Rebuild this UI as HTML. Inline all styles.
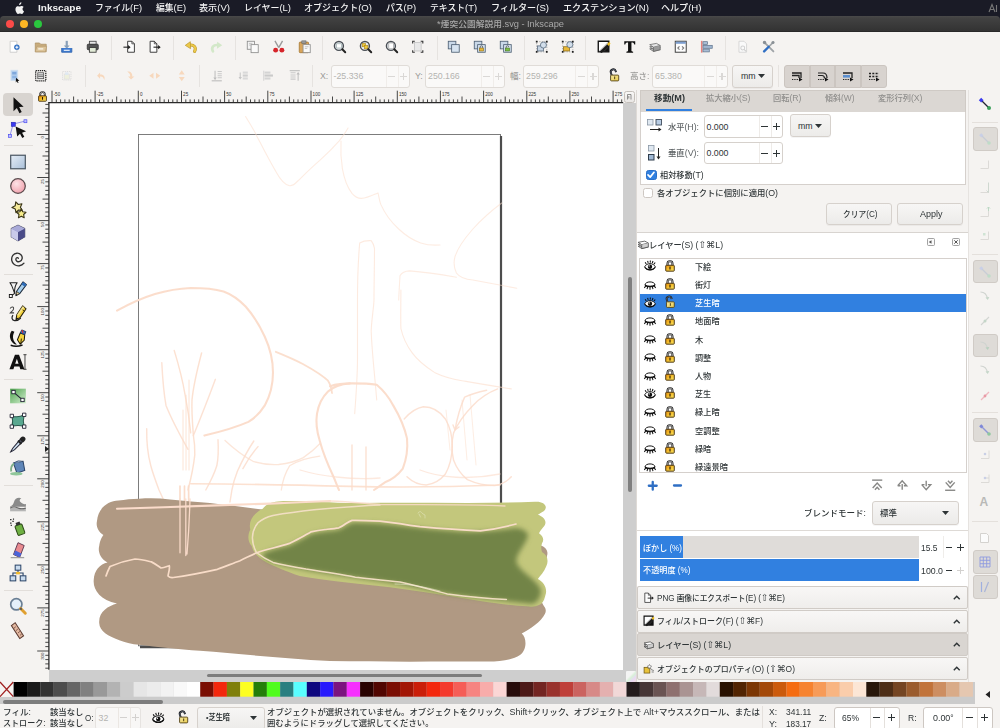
<!DOCTYPE html>
<html lang="ja"><head><meta charset="utf-8"><title>Inkscape</title><style>
html,body{margin:0;padding:0}
body{width:1000px;height:728px;position:relative;overflow:hidden;background:#f5f3f1;font-family:"Liberation Sans","Noto Sans CJK JP",sans-serif;}
div,svg,span.t{position:absolute;box-sizing:border-box}
span.t{white-space:nowrap;line-height:14px;display:block}
svg{overflow:visible}
span.k{font-family:"DejaVu Sans",sans-serif;font-size:1.12em}
</style></head><body>
<div style="left:0px;top:0px;width:1000px;height:22px;background:#1a1b26;"></div>
<svg style="left:14px;top:2px;" width="11" height="12" viewBox="0 0 11 12"><path d="M7.6 3.2c.5-.6.8-1.4.7-2.2-.7.1-1.5.5-2 1.1-.4.5-.8 1.300-.7 2.100.8 0 1.500-.4 2-1zM9.600 8.800c0-1.500 1.200-2.200 1.300-2.300-.7-1-1.800-1.200-2.200-1.200-.9-.1-1.800.6-2.300.6s-1.200-.5-2-.5c-1 0-2 .6-2.500 1.500-1.100 1.900-.3 4.600.800 6.100.5.700 1.100 1.600 1.900 1.500.8 0 1.100-.5 2-.5s1.200.5 2 .5 1.300-.7 1.900-1.500c.6-.8.800-1.700.8-1.700s-1.700-.6-1.700-2.500z" fill="#f2f2f2" transform="scale(0.86) translate(0.3,-0.6)"/></svg>
<span class="t" style="transform:scaleX(1.017);left:38px;transform-origin:0 50%;top:0.90px;font-size:9.9px;color:#f4f4f4;font-weight:700;">Inkscape</span>
<span class="t" style="transform:scaleX(0.975);left:95px;transform-origin:0 50%;top:0.90px;font-size:9.0px;color:#f4f4f4;font-weight:500;">ファイル<span style="font-size:1.06em">(F)</span></span>
<span class="t" style="transform:scaleX(0.976);left:156px;transform-origin:0 50%;top:0.90px;font-size:9.0px;color:#f4f4f4;font-weight:500;">編集<span style="font-size:1.06em">(E)</span></span>
<span class="t" style="transform:scaleX(1.009);left:199px;transform-origin:0 50%;top:0.90px;font-size:9.0px;color:#f4f4f4;font-weight:500;">表示<span style="font-size:1.06em">(V)</span></span>
<span class="t" style="transform:scaleX(0.992);left:244px;transform-origin:0 50%;top:0.90px;font-size:9.0px;color:#f4f4f4;font-weight:500;">レイヤー<span style="font-size:1.06em">(L)</span></span>
<span class="t" style="transform:scaleX(1.003);left:304px;transform-origin:0 50%;top:0.90px;font-size:9.0px;color:#f4f4f4;font-weight:500;">オブジェクト<span style="font-size:1.06em">(O)</span></span>
<span class="t" style="transform:scaleX(0.976);left:386px;transform-origin:0 50%;top:0.90px;font-size:9.0px;color:#f4f4f4;font-weight:500;">パス<span style="font-size:1.06em">(P)</span></span>
<span class="t" style="transform:scaleX(0.981);left:430px;transform-origin:0 50%;top:0.90px;font-size:9.0px;color:#f4f4f4;font-weight:500;">テキスト<span style="font-size:1.06em">(T)</span></span>
<span class="t" style="transform:scaleX(1.008);left:491px;transform-origin:0 50%;top:0.90px;font-size:9.0px;color:#f4f4f4;font-weight:500;">フィルター<span style="font-size:1.06em">(S)</span></span>
<span class="t" style="transform:scaleX(1.012);left:562.5px;transform-origin:0 50%;top:0.90px;font-size:9.0px;color:#f4f4f4;font-weight:500;">エクステンション<span style="font-size:1.06em">(N)</span></span>
<span class="t" style="transform:scaleX(1.006);left:661px;transform-origin:0 50%;top:0.90px;font-size:9.0px;color:#f4f4f4;font-weight:500;">ヘルプ<span style="font-size:1.06em">(H)</span></span>
<svg style="left:988px;top:3px;" width="11" height="10" viewBox="0 0 11 10"><path d="M1 9L4 1.500 7 9M2.200 6.500h3.600M8.500 2v7" stroke="#777" stroke-width="1.100" fill="none"/></svg>
<div style="left:0px;top:15.5px;width:1000px;height:16.2px;background:linear-gradient(#4a4a4a 0,#424242 12%,#333333 92%,#222 100%);border-radius:4px 4px 0 0;"></div>
<div style="left:5.7px;top:19.7px;width:8.6px;height:8.6px;background:#fc4b48;border-radius:50%;"></div>
<div style="left:19.7px;top:19.7px;width:8.6px;height:8.6px;background:#fdb724;border-radius:50%;"></div>
<div style="left:33.7px;top:19.7px;width:8.6px;height:8.6px;background:#2ac73e;border-radius:50%;"></div>
<span class="t" style="transform:scaleX(1.030);left:437px;transform-origin:0 50%;top:17.20px;font-size:8.5px;color:#a9a9a9;font-weight:500;"><span style="font-size:1.06em">*</span>煙突公園解説用<span style="font-size:1.06em">.svg</span> <span style="font-size:1.06em">-</span> <span style="font-size:1.06em">Inkscape</span></span>
<div style="left:0px;top:31.7px;width:1000px;height:58.5px;background:#f5f3f1;"></div>
<svg style="left:8.25px;top:40.25px;" width="13.5" height="13.5" viewBox="0 0 16 16"><path d="M2.500 1.500h8v13h-8z" fill="#fff" stroke="#c9c9c9" stroke-width="1"/><circle cx="10.500" cy="8.500" r="3.200" fill="#2f6fc4"/><path d="M10.500 6.700v3.600M8.700 8.500h3.600" stroke="#fff" stroke-width="1.200"/></svg>
<svg style="left:34.25px;top:40.25px;" width="13.5" height="13.5" viewBox="0 0 16 16"><path d="M1.500 3.500h5l1.500 1.500h6.500v9h-13z" fill="#c9ac7c" stroke="#a88c5e" stroke-width=".8"/><path d="M1.500 14l2-6.500h11.500l-1.500 6.500z" fill="#dcc49a" stroke="#b0956a" stroke-width=".7"/><rect x="5" y="9.500" width="6" height="2" fill="#f3ead8"/></svg>
<svg style="left:60.25px;top:40.25px;" width="13.5" height="13.5" viewBox="0 0 16 16"><path d="M8 1v7" stroke="#8aa0b8" stroke-width="2.600"/><path d="M4.500 6.500h7l-3.500 4z" fill="#8aa0b8"/><path d="M2 9.500v5h12v-5" fill="#3f7bd0" stroke="#2d62ad" stroke-width="1"/><rect x="4.500" y="11.500" width="7" height="1.500" fill="#dfe9f7"/></svg>
<svg style="left:86.25px;top:40.25px;" width="13.5" height="13.5" viewBox="0 0 16 16"><rect x="4" y="1.500" width="8" height="4" fill="#e8e8e8" stroke="#444" stroke-width="1"/><rect x="1.500" y="5" width="13" height="6.500" rx="1" fill="#555" stroke="#333" stroke-width="1"/><rect x="4" y="9" width="8" height="5.500" fill="#e3ecd8" stroke="#333" stroke-width="1"/></svg>
<svg style="left:122.75px;top:40.25px;" width="13.5" height="13.5" viewBox="0 0 16 16"><path d="M5.500 1.500h5l3 3v10h-8z" fill="#fdfdfd" stroke="#333" stroke-width="1.100"/><path d="M10.500 1.500v3h3" fill="none" stroke="#333" stroke-width=".9"/><path d="M0.500 8.500h7" stroke="#222" stroke-width="1.300"/><path d="M6 6l3 2.500-3 2.500z" fill="#222"/></svg>
<svg style="left:147.75px;top:40.25px;" width="13.5" height="13.5" viewBox="0 0 16 16"><path d="M2.500 1.500h5l3 3v10h-8z" fill="#fdfdfd" stroke="#333" stroke-width="1.100"/><path d="M7.500 1.500v3h3" fill="none" stroke="#333" stroke-width=".9"/><path d="M6.500 8.500h7" stroke="#222" stroke-width="1.300"/><path d="M12 6l3 2.500-3 2.500z" fill="#222"/></svg>
<svg style="left:183.75px;top:40.25px;" width="13.5" height="13.5" viewBox="0 0 16 16"><path d="M12.500 13.500c2.500-4.500-.5-8-5.500-7.500" fill="none" stroke="#b8942a" stroke-width="3.600" stroke-linecap="round"/><path d="M12.500 13.500c2.500-4.500-.5-8-5.500-7.500" fill="none" stroke="#ecc94a" stroke-width="2.400" stroke-linecap="round"/><path d="M7.500 2l-6 4.300 6.300 4z" fill="#ecc94a" stroke="#b8942a" stroke-width=".8" stroke-linejoin="round"/></svg>
<svg style="left:210.25px;top:40.25px;" width="13.5" height="13.5" viewBox="0 0 16 16"><path d="M3.500 13.500c-2.500-4.500.5-8 5.500-7.500" fill="none" stroke="#d3e8c9" stroke-width="3.200" stroke-linecap="round"/><path d="M8.500 2l6 4.300-6.300 4z" fill="#d3e8c9"/></svg>
<svg style="left:245.75px;top:40.25px;" width="13.5" height="13.5" viewBox="0 0 16 16"><rect x="1.500" y="1.500" width="8.500" height="9.500" fill="#f4f4f4" stroke="#8d8d8d" stroke-width="1"/><rect x="6" y="5.500" width="8.500" height="9.500" fill="#fafafa" stroke="#8d8d8d" stroke-width="1"/><path d="M3.500 4h4M3.500 6h2" stroke="#aaa" stroke-width=".8"/></svg>
<svg style="left:271.75px;top:40.25px;" width="13.5" height="13.5" viewBox="0 0 16 16"><path d="M3.500 1l4.500 8M12.500 1l-4.500 8" stroke="#9a9a9a" stroke-width="1.600"/><circle cx="4.300" cy="12" r="2.900" fill="#d6252b"/><circle cx="11.700" cy="12" r="2.900" fill="#d6252b"/></svg>
<svg style="left:297.75px;top:40.25px;" width="13.5" height="13.5" viewBox="0 0 16 16"><rect x="1.500" y="2.500" width="11" height="12.500" rx="1" fill="#d9a55a" stroke="#a87a36" stroke-width="1"/><rect x="4.500" y="1" width="5" height="3" fill="#999" stroke="#666" stroke-width=".7"/><rect x="6" y="5.500" width="8.500" height="9.500" fill="#fafafa" stroke="#8d8d8d" stroke-width="1"/><path d="M8 8h4.500M8 10h3" stroke="#aaa" stroke-width=".8"/></svg>
<svg style="left:333.25px;top:40.25px;" width="13.5" height="13.5" viewBox="0 0 16 16"><circle cx="7" cy="7" r="5.300" fill="#e9eef2" stroke="#4a4f55" stroke-width="1.700"/><rect x="4" y="4.500" width="6" height="5" fill="#fff" stroke="#9aa" stroke-width=".8"/><path d="M11 11l3.500 3.500" stroke="#222" stroke-width="2.300" stroke-linecap="round"/></svg>
<svg style="left:359.25px;top:40.25px;" width="13.5" height="13.5" viewBox="0 0 16 16"><circle cx="7" cy="7" r="5.300" fill="#e9eef2" stroke="#4a4f55" stroke-width="1.700"/><rect x="3.800" y="4" width="4" height="4" fill="#f0c93b" stroke="#a8861c" stroke-width=".7"/><rect x="6.500" y="6.500" width="4" height="4" fill="#f0c93b" stroke="#a8861c" stroke-width=".7"/><path d="M11 11l3.500 3.500" stroke="#222" stroke-width="2.300" stroke-linecap="round"/></svg>
<svg style="left:385.25px;top:40.25px;" width="13.5" height="13.5" viewBox="0 0 16 16"><circle cx="7" cy="7" r="5.300" fill="#e9eef2" stroke="#4a4f55" stroke-width="1.700"/><rect x="4.500" y="3.500" width="5.500" height="7" fill="#fff" stroke="#999" stroke-width=".8"/><path d="M11 11l3.500 3.500" stroke="#222" stroke-width="2.300" stroke-linecap="round"/></svg>
<svg style="left:411.25px;top:40.25px;" width="13.5" height="13.5" viewBox="0 0 16 16"><rect x="4" y="3" width="8" height="10" fill="#e9e9e9" stroke="#bbb" stroke-width=".8"/><path d="M2 4V1.500h2.500M11.500 1.500H14V4M14 12v2.500h-2.500M4.500 14.500H2V12" fill="none" stroke="#333" stroke-width="1.300"/></svg>
<svg style="left:447.25px;top:40.25px;" width="13.5" height="13.5" viewBox="0 0 16 16"><rect x="1.500" y="1.500" width="9" height="9" fill="#c9d8e8" stroke="#4d5f73" stroke-width="1"/><rect x="5.500" y="5.500" width="9" height="9" fill="#d7e4f1" stroke="#4d5f73" stroke-width="1"/></svg>
<svg style="left:473.25px;top:40.25px;" width="13.5" height="13.5" viewBox="0 0 16 16"><rect x="1.500" y="1.500" width="9" height="9" fill="#c9d8e8" stroke="#4d5f73" stroke-width="1"/><rect x="5.500" y="5.500" width="9" height="9" fill="#d7e4f1" stroke="#4d5f73" stroke-width="1"/><rect x="7.500" y="9.500" width="5" height="3.500" fill="#e8b93a" stroke="#8a6a14" stroke-width=".7"/><path d="M8.500 9.500v-1.200a1.500 1.500 0 0 1 3 0v1.200" fill="none" stroke="#555" stroke-width=".9"/></svg>
<svg style="left:499.25px;top:40.25px;" width="13.5" height="13.5" viewBox="0 0 16 16"><rect x="1.500" y="1.500" width="9" height="9" fill="#c9d8e8" stroke="#4d5f73" stroke-width="1"/><rect x="5.500" y="5.500" width="9" height="9" fill="#d7e4f1" stroke="#4d5f73" stroke-width="1"/><rect x="7.500" y="9.500" width="5" height="3.500" fill="#7cc046" stroke="#45761f" stroke-width=".7"/><path d="M8.500 9.500v-1.200a1.500 1.500 0 0 1 3 0" fill="none" stroke="#555" stroke-width=".9"/></svg>
<svg style="left:534.75px;top:40.25px;" width="13.5" height="13.5" viewBox="0 0 16 16"><path d="M2 2h12v12h-12z" fill="none" stroke="#777" stroke-width=".7" stroke-dasharray="1.500 1.500"/><rect x="3" y="7" width="7" height="6" fill="#c5d3e2" stroke="#55677b" stroke-width=".9"/><circle cx="10" cy="6" r="3.600" fill="#d2deea" stroke="#55677b" stroke-width=".9"/><path d="M1 1h2v2h-2zM13 1h2v2h-2zM1 13h2v2h-2zM13 13h2v2h-2z" fill="#222"/></svg>
<svg style="left:560.75px;top:40.25px;" width="13.5" height="13.5" viewBox="0 0 16 16"><path d="M2 2h12v12h-12z" fill="none" stroke="#777" stroke-width=".7" stroke-dasharray="1.500 1.500"/><rect x="3" y="8" width="7" height="5" fill="#e8b93a" stroke="#8a6a14" stroke-width=".9"/><circle cx="10.500" cy="5.500" r="3.600" fill="#d2deea" stroke="#55677b" stroke-width=".9"/><path d="M1 1h2v2h-2zM13 1h2v2h-2zM1 13h2v2h-2zM13 13h2v2h-2z" fill="#222"/></svg>
<svg style="left:596.75px;top:40.25px;" width="13.5" height="13.5" viewBox="0 0 16 16"><defs><linearGradient id="gf1" x1="0" y1="0" x2="1" y2="1"><stop offset=".45" stop-color="#fff"/><stop offset=".6" stop-color="#888"/><stop offset=".8" stop-color="#111"/></linearGradient></defs><path d="M1.500 1.500h12.500v12.500h-12.500z" fill="url(#gf1)" stroke="#111" stroke-width="1.600"/><path d="M3 14l9.500-9 2 2-9 8.500z" fill="#1a1a1a"/><path d="M12 5l2.500-3 1.500 2-2 3z" fill="#f0c020"/></svg>
<svg style="left:622.75px;top:40.25px;" width="13.5" height="13.5" viewBox="0 0 16 16"><path d="M1.500 1.500h13v3.800h-1.200c-.3-1.700-1-2.300-3.300-2.300v9.500c0 1 .5 1.300 2 1.400v1.100h-8v-1.100c1.500-.1 2-.4 2-1.400v-9.500c-2.300 0-3 .6-3.300 2.300h-1.200z" fill="#111"/></svg>
<svg style="left:648.25px;top:40.25px;" width="13.5" height="13.5" viewBox="0 0 16 16"><path d="M2 10.500l8-1.500 4.500 2.500-8 2z" fill="#bdbdbd" stroke="#555" stroke-width=".8" stroke-linejoin="round"/><path d="M2 8l8-1.500 4.500 2.500-8 2z" fill="#cfcfcf" stroke="#555" stroke-width=".8" stroke-linejoin="round"/><path d="M2 5.500l8-1.500 4.500 2.500-8 2z" fill="#e6e6e6" stroke="#555" stroke-width=".8" stroke-linejoin="round"/><path d="M14.500 6.500v5l-8 2v-5" fill="#9a9a9a" stroke="#555" stroke-width=".7"/></svg>
<svg style="left:674.25px;top:40.25px;" width="13.5" height="13.5" viewBox="0 0 16 16"><rect x="1.500" y="1.500" width="13" height="13" fill="#fdfdfd" stroke="#444" stroke-width="1.200"/><rect x="2" y="2" width="12" height="2.500" fill="#7d9fd0"/><path d="M6.500 7.500l-2 2 2 2M9.500 7.500l2 2-2 2" fill="none" stroke="#777" stroke-width="1.300"/></svg>
<svg style="left:700.25px;top:40.25px;" width="13.5" height="13.5" viewBox="0 0 16 16"><path d="M2 1v14" stroke="#e8827c" stroke-width="1.800"/><rect x="3.500" y="2" width="5.500" height="3.300" fill="#a9bdd4" stroke="#5a6f88" stroke-width=".8"/><rect x="3.500" y="6.300" width="11" height="3.500" fill="#9fb6d0" stroke="#5a6f88" stroke-width=".8"/><rect x="3.500" y="10.800" width="7.500" height="3.300" fill="#a9bdd4" stroke="#5a6f88" stroke-width=".8"/></svg>
<svg style="left:735.75px;top:40.25px;" width="13.5" height="13.5" viewBox="0 0 16 16"><path d="M3.500 1.500h6l3 3v10h-9z" fill="#fafafa" stroke="#d2d2d2" stroke-width="1"/><circle cx="8" cy="9.500" r="2.300" fill="none" stroke="#d0d0d0" stroke-width="1.200"/><path d="M9.500 11l2.500 2.500" stroke="#ccc" stroke-width="1.300"/></svg>
<svg style="left:762.25px;top:40.25px;" width="13.5" height="13.5" viewBox="0 0 16 16"><path d="M2.500 2.500l11 11" stroke="#9fa4a8" stroke-width="2.200" stroke-linecap="round"/><path d="M13.500 2.500l-5.500 5.500" stroke="#9fa4a8" stroke-width="2" stroke-linecap="round"/><path d="M8 8l-5.500 5.500" stroke="#2f6fc4" stroke-width="2.800" stroke-linecap="round"/><circle cx="3" cy="3" r="2" fill="#8a9096"/><circle cx="13" cy="3" r="1.800" fill="#8a9096"/></svg>
<div style="left:110.5px;top:36px;width:1px;height:24px;background:#e6e3e0;"></div>
<div style="left:172.5px;top:36px;width:1px;height:24px;background:#e6e3e0;"></div>
<div style="left:234.5px;top:36px;width:1px;height:24px;background:#e6e3e0;"></div>
<div style="left:322.0px;top:36px;width:1px;height:24px;background:#e6e3e0;"></div>
<div style="left:436.5px;top:36px;width:1px;height:24px;background:#e6e3e0;"></div>
<div style="left:523.5px;top:36px;width:1px;height:24px;background:#e6e3e0;"></div>
<div style="left:585.0px;top:36px;width:1px;height:24px;background:#e6e3e0;"></div>
<div style="left:725.0px;top:36px;width:1px;height:24px;background:#e6e3e0;"></div>
<svg style="left:8.25px;top:68.75px;" width="13.5" height="13.5" viewBox="0 0 16 16"><rect x="3.500" y="1.500" width="8" height="12" fill="#b4cfee" stroke="#cfdff0" stroke-width="1"/><rect x="5" y="3.500" width="5" height="3" fill="#7fa8dc"/><rect x="5" y="8" width="5" height="3" fill="#8db4e3"/><path d="M9.500 10.500l4 3.500-2 .2 1 2-1 .4-1-2-1.300 1.300z" fill="#111"/></svg>
<svg style="left:34.25px;top:68.75px;" width="13.5" height="13.5" viewBox="0 0 16 16"><rect x="2" y="2" width="12" height="12" fill="none" stroke="#111" stroke-width="1.400" stroke-dasharray="1.400 1"/><rect x="4.500" y="4.500" width="7" height="7" fill="#eee" stroke="#444" stroke-width=".9"/><path d="M5 7h6M5 9h6" stroke="#444" stroke-width=".9"/></svg>
<svg style="left:60.25px;top:68.75px;" width="13.5" height="13.5" viewBox="0 0 16 16"><rect x="3" y="3" width="10" height="10" fill="none" stroke="#d9d9d9" stroke-width="1" stroke-dasharray="1.500 1"/><rect x="5" y="6" width="6" height="6" fill="#eef0dd" stroke="#dedede" stroke-width=".8"/><rect x="6" y="4" width="4" height="3" fill="#dfe8f2"/></svg>
<svg style="left:95.25px;top:68.75px;" width="13.5" height="13.5" viewBox="0 0 16 16"><path d="M11 13c1.500-4-1-7-5-6.500v-2.500l-3.500 4 3.500 3.500v-2.500c2.500-.3 4 1 5 4z" fill="#f7d8bd"/></svg>
<svg style="left:123.25px;top:68.75px;" width="13.5" height="13.5" viewBox="0 0 16 16"><path d="M5 3c4-.5 6.500 2 6 6h2.500l-4 3.500-3.500-3.500h2.500c.3-2.500-1-4-3.500-6z" fill="#f7d8bd"/></svg>
<svg style="left:147.75px;top:68.75px;" width="13.5" height="13.5" viewBox="0 0 16 16"><path d="M1.500 8l5-3.500v7zM14.500 8l-5-3.500v7z" fill="#f7d8bd"/></svg>
<svg style="left:174.75px;top:68.75px;" width="13.5" height="13.5" viewBox="0 0 16 16"><path d="M8 1.500l3.500 5h-7zM8 14.500l3.500-5h-7z" fill="#f7d8bd"/></svg>
<svg style="left:210.25px;top:68.75px;" width="13.5" height="13.5" viewBox="0 0 16 16"><path d="M6 2v10" stroke="#bdbdbd" stroke-width="1.200"/><path d="M4 10l2 3 2-3z" fill="#bdbdbd"/><path d="M9 3h5M9 5.500h5M9 8h5M9 10.500h5" stroke="#c9c9c9" stroke-width="1.200"/><path d="M2 14h12" stroke="#bdbdbd" stroke-width="1.300"/></svg>
<svg style="left:236.25px;top:68.75px;" width="13.5" height="13.5" viewBox="0 0 16 16"><path d="M5 4v7" stroke="#c5c5c5" stroke-width="1.200"/><path d="M3 9.500l2 3 2-3z" fill="#c5c5c5"/><rect x="8" y="3" width="6" height="2.500" fill="#d9d9d9"/><rect x="8" y="6.500" width="6" height="2.500" fill="#cfcfcf"/><rect x="8" y="10" width="6" height="2.500" fill="#d9d9d9"/></svg>
<svg style="left:261.75px;top:68.75px;" width="13.5" height="13.5" viewBox="0 0 16 16"><rect x="3" y="3" width="7" height="2.500" fill="#d4d4d4"/><rect x="3" y="6.500" width="10" height="2.500" fill="#cacaca"/><rect x="3" y="10" width="7" height="2.500" fill="#d4d4d4"/><path d="M2 2v12" stroke="#cfcfcf" stroke-width="1"/></svg>
<svg style="left:287.75px;top:68.75px;" width="13.5" height="13.5" viewBox="0 0 16 16"><path d="M2 2h12" stroke="#bdbdbd" stroke-width="1.300"/><path d="M3 4.500h6M3 7h6M3 9.500h6M3 12h6" stroke="#c9c9c9" stroke-width="1.200"/><path d="M12 14V5" stroke="#bdbdbd" stroke-width="1.200"/><path d="M10 6.500l2-3 2 3z" fill="#bdbdbd"/></svg>
<div style="left:84.5px;top:65px;width:1px;height:22px;background:#e6e3e0;"></div>
<div style="left:198.5px;top:65px;width:1px;height:22px;background:#e6e3e0;"></div>
<div style="left:312.0px;top:65px;width:1px;height:22px;background:#e6e3e0;"></div>
<div style="left:778.3px;top:65px;width:1px;height:22px;background:#e6e3e0;"></div>
<span class="t" style="left:320px;transform-origin:0 50%;top:69.00px;font-size:8.79px;color:#9b9a98;font-weight:400;">X:</span>
<div style="left:330.5px;top:64.5px;width:79.0px;height:23.0px;background:#faf9f8;border:1px solid #e0dcd8;border-radius:3px;"></div>
<div style="left:385.5px;top:65.5px;width:1px;height:21.0px;background:#f0edea;"></div>
<div style="left:397.5px;top:65.5px;width:1px;height:21.0px;background:#f0edea;"></div>
<span class="t" style="left:333.5px;transform-origin:0 50%;top:69.30px;font-size:8.79px;color:#b4b4b1;font-weight:400;">-25.336</span>
<div style="left:388.0px;top:75.5px;width:7px;height:1.2px;background:#dad8d6;"></div>
<div style="left:400.0px;top:75.5px;width:7px;height:1.2px;background:#dad8d6;"></div>
<div style="left:402.9px;top:72.6px;width:1.2px;height:7px;background:#dad8d6;"></div>
<span class="t" style="left:415px;transform-origin:0 50%;top:69.00px;font-size:8.79px;color:#9b9a98;font-weight:400;">Y:</span>
<div style="left:425px;top:64.5px;width:79.5px;height:23.0px;background:#faf9f8;border:1px solid #e0dcd8;border-radius:3px;"></div>
<div style="left:480.5px;top:65.5px;width:1px;height:21.0px;background:#f0edea;"></div>
<div style="left:492.5px;top:65.5px;width:1px;height:21.0px;background:#f0edea;"></div>
<span class="t" style="left:428px;transform-origin:0 50%;top:69.30px;font-size:8.79px;color:#b4b4b1;font-weight:400;">250.166</span>
<div style="left:483.0px;top:75.5px;width:7px;height:1.2px;background:#dad8d6;"></div>
<div style="left:495.0px;top:75.5px;width:7px;height:1.2px;background:#dad8d6;"></div>
<div style="left:497.9px;top:72.6px;width:1.2px;height:7px;background:#dad8d6;"></div>
<span class="t" style="left:510px;transform-origin:0 50%;top:69.00px;font-size:8.5px;color:#9b9a98;font-weight:500;">幅:</span>
<div style="left:523px;top:64.5px;width:76px;height:23.0px;background:#faf9f8;border:1px solid #e0dcd8;border-radius:3px;"></div>
<div style="left:575px;top:65.5px;width:1px;height:21.0px;background:#f0edea;"></div>
<div style="left:587px;top:65.5px;width:1px;height:21.0px;background:#f0edea;"></div>
<span class="t" style="left:526px;transform-origin:0 50%;top:69.30px;font-size:8.79px;color:#b4b4b1;font-weight:400;">259.296</span>
<div style="left:577.5px;top:75.5px;width:7px;height:1.2px;background:#dad8d6;"></div>
<div style="left:589.5px;top:75.5px;width:7px;height:1.2px;background:#dad8d6;"></div>
<div style="left:592.4px;top:72.6px;width:1.2px;height:7px;background:#dad8d6;"></div>
<svg style="left:608.25px;top:69.05px;" width="12.5" height="12.5" viewBox="0 0 16 16"><defs><linearGradient id="lko" x1="0" y1="0" x2="1" y2="1"><stop offset="0" stop-color="#f4e6a0"/><stop offset="1" stop-color="#eccf50"/></linearGradient></defs><g transform="rotate(-18 4.700 8)"><path d="M4.700 8v-3.300a3.300 3.300 0 0 1 6.600 0v1.300" fill="none" stroke="#16181c" stroke-width="2.500"/><path d="M4.700 8v-3.300a3.300 3.300 0 0 1 6.600 0v1.300" fill="none" stroke="#7a8494" stroke-width=".7"/></g><rect x="3.300" y="7.800" width="10.400" height="7.400" rx="1" fill="url(#lko)" stroke="#4a3a10" stroke-width="1.100"/><rect x="7.800" y="9.600" width="1.400" height="3.500" fill="#5a4a18"/></svg>
<span class="t" style="transform:scaleX(1.006);left:630px;transform-origin:0 50%;top:69.00px;font-size:8.5px;color:#9b9a98;font-weight:500;">高さ:</span>
<div style="left:652px;top:64.5px;width:76px;height:23.0px;background:#faf9f8;border:1px solid #e0dcd8;border-radius:3px;"></div>
<div style="left:704px;top:65.5px;width:1px;height:21.0px;background:#f0edea;"></div>
<div style="left:716px;top:65.5px;width:1px;height:21.0px;background:#f0edea;"></div>
<span class="t" style="left:655px;transform-origin:0 50%;top:69.30px;font-size:8.79px;color:#b4b4b1;font-weight:400;">65.380</span>
<div style="left:706.5px;top:75.5px;width:7px;height:1.2px;background:#dad8d6;"></div>
<div style="left:718.5px;top:75.5px;width:7px;height:1.2px;background:#dad8d6;"></div>
<div style="left:721.4px;top:72.6px;width:1.2px;height:7px;background:#dad8d6;"></div>
<div style="left:732px;top:64.5px;width:41px;height:23.0px;background:linear-gradient(#f7f6f5,#ecebe9);border:1px solid #d6d1cc;border-radius:3px;box-shadow:0 1px 0 rgba(0,0,0,.04);"></div>
<span class="t" style="left:741px;transform-origin:0 50%;top:69.00px;font-size:8.79px;color:#2e3436;font-weight:400;">mm</span>
<svg style="left:758px;top:74px;" width="7" height="4" viewBox="0 0 7 4"><path d="M0 0h7l-3.500 4z" fill="#2e3436"/></svg>
<div style="left:784px;top:64.5px;width:25.7px;height:23px;background:#d8d3cf;border:1px solid #cbc5c0;border-radius:3px 0 0 3px;"></div>
<svg style="left:790.8px;top:70.5px;" width="12" height="11" viewBox="0 0 12 11"><path d="M1 2h9v5M1 4.500h7v2.500" fill="none" stroke="#222" stroke-width="1.300"/><path d="M1 8.500h7" stroke="#222" stroke-width="1.200" stroke-dasharray="1.300 1"/><path d="M8 6.500l3.500 2-3.500 2z" fill="#111"/></svg>
<div style="left:809.7px;top:64.5px;width:25.7px;height:23px;background:#d8d3cf;border:1px solid #cbc5c0;"></div>
<svg style="left:816.5px;top:70.5px;" width="12" height="11" viewBox="0 0 12 11"><path d="M1 2h5q4 0 4 5M1 4.500h4q2.500 0 2.500 3" fill="none" stroke="#222" stroke-width="1.200"/><path d="M1 8.500h7" stroke="#222" stroke-width="1.200" stroke-dasharray="1.300 1"/><path d="M8 6.500l3.500 2-3.500 2z" fill="#111"/></svg>
<div style="left:835.4px;top:64.5px;width:25.7px;height:23px;background:#d8d3cf;border:1px solid #cbc5c0;"></div>
<svg style="left:842.1999999999999px;top:70.5px;" width="12" height="11" viewBox="0 0 12 11"><path d="M1 2h9v5" fill="none" stroke="#222" stroke-width="1.300"/><rect x="1" y="4" width="7" height="2.600" fill="#5b8fd0"/><path d="M1 8.500h7" stroke="#222" stroke-width="1.200" stroke-dasharray="1.300 1"/><path d="M8 6.500l3.500 2-3.500 2z" fill="#111"/></svg>
<div style="left:861.1px;top:64.5px;width:25.7px;height:23px;background:#d8d3cf;border:1px solid #cbc5c0;border-radius:0 3px 3px 0;"></div>
<svg style="left:867.9px;top:70.5px;" width="12" height="11" viewBox="0 0 12 11"><path d="M1 2.500h10M1 5.500h10" stroke="#222" stroke-width="1.600" stroke-dasharray="2 1.300"/><path d="M1 8.500h7" stroke="#222" stroke-width="1.200" stroke-dasharray="1.300 1"/><path d="M8 6.500l3.500 2-3.500 2z" fill="#111"/></svg>
<div style="left:2.6px;top:92.8px;width:30.4px;height:23.2px;background:#d8d4d0;border-radius:4px;"></div>
<svg style="left:8.5px;top:95.5px;" width="18" height="18" viewBox="0 0 16 16"><path d="M4 1l9 8.500-4 .3 2.300 4.500-2 1-2.300-4.600-3 2.800z" fill="#111"/></svg>
<svg style="left:8.5px;top:119.7px;" width="18" height="18" viewBox="0 0 16 16"><path d="M0.800 14.100L3.700 3.600l11-2.700" fill="none" stroke="#8a8ae8" stroke-width=".8"/><rect x="2" y="2" width="3.600" height="3.600" fill="#3a3af0" stroke="#2020b0" stroke-width=".5"/><rect x="13.300" y="-.2" width="2.600" height="2.600" fill="#c0c0ff" stroke="#4a4af0" stroke-width=".6"/><rect x="-.5" y="12.800" width="2.600" height="2.600" fill="#c0c0ff" stroke="#4a4af0" stroke-width=".6"/><path d="M5.900 5.800l9.300 4.200-3.600 1.300 2 3.600-1.800 1-2-3.700-2.500 2.400z" fill="#111"/></svg>
<svg style="left:8.5px;top:153.0px;" width="18" height="18" viewBox="0 0 16 16"><defs><linearGradient id="gr1" x1="0" y1="0" x2="1" y2="1"><stop offset="0" stop-color="#e6eef7"/><stop offset="1" stop-color="#a9bfd8"/></linearGradient></defs><rect x="1.500" y="2" width="13" height="12" fill="url(#gr1)" stroke="#4e5a66" stroke-width="1.100"/></svg>
<svg style="left:8.5px;top:176.8px;" width="18" height="18" viewBox="0 0 16 16"><defs><radialGradient id="gr2" cx=".4" cy=".35" r=".7"><stop offset="0" stop-color="#fde3e6"/><stop offset="1" stop-color="#f0a0ac"/></radialGradient></defs><circle cx="8" cy="8" r="6.500" fill="url(#gr2)" stroke="#5a4a4c" stroke-width="1.100"/></svg>
<svg style="left:8.5px;top:200.5px;" width="18" height="18" viewBox="0 0 16 16"><path d="M6 .8l2.300 2.300 3.200-.6-1.400 3 1.600 2.800-3.200-.3-2.300 2.400-.6-3.200-3-1.400 2.900-1.500z" fill="#f5ea9a" stroke="#3a3518" stroke-width="1" stroke-linejoin="round"/><path d="M11 7l1.200 2.600 2.900.4-2.100 2 .5 2.900-2.500-1.400-2.600 1.400.5-2.900-2.100-2 2.900-.4z" fill="#f7ec8a" stroke="#3a3518" stroke-width="1" stroke-linejoin="round"/></svg>
<svg style="left:8.5px;top:224.0px;" width="18" height="18" viewBox="0 0 16 16"><path d="M8 1l6 3v7.500l-6 3.500-6-3.500v-7.500z" fill="#8f90c8" stroke="#55566e" stroke-width=".9" stroke-linejoin="round"/><path d="M2 4l6 3.200v7.800l-6-3.500z" fill="#c9caea"/><path d="M8 7.200l6-3.200v7.500l-6 3.500z" fill="#4a4b88"/><path d="M8 1l6 3-6 3.200-6-3.200z" fill="#a9aad8"/></svg>
<svg style="left:8.5px;top:248.5px;" width="18" height="18" viewBox="0 0 16 16"><path d="M8.300 8.300c-.3-1-2-.8-2.200.6-.2 1.800 1.800 2.900 3.500 2.200 2.300-1 2.800-4 1.200-5.800-2-2.300-5.700-2-7.400.4-1.800 2.600-1.200 6.300 1.300 8.100 2.700 1.900 6.500 1.400 8.600-1.200" fill="none" stroke="#333" stroke-width="1.200" stroke-linecap="round"/></svg>
<svg style="left:8.5px;top:281.4px;" width="18" height="18" viewBox="0 0 16 16"><path d="M.8 1.500h6.500c-2.500 3-2.500 6-2.300 9.500-1.500-3.500-1.700-6.500-4.200-9.500z" fill="#f4f4f4" stroke="#222" stroke-width=".9" stroke-linejoin="round"/><path d="M5 11l-3 2.200" stroke="#222" stroke-width="1"/><rect x=".3" y="12" width="2.600" height="2.600" fill="#fff" stroke="#111" stroke-width=".8"/><path d="M12.500 .8l3 2.400-6 8-3.300 1.800.4-3.700z" fill="#a8d0ee" stroke="#1e2c3c" stroke-width=".9" stroke-linejoin="round"/><path d="M11 2.800l3 2.300 1.500-2-3-2.300z" fill="#2e6cb8"/><path d="M6.200 13l.4-3.700 2.900 1.900z" fill="#f0d9a0" stroke="#222" stroke-width=".7"/><path d="M6.200 13l.2-1.500 1.100.8z" fill="#111"/></svg>
<svg style="left:8.5px;top:305.0px;" width="18" height="18" viewBox="0 0 16 16"><path d="M1 3.200c1.200-2.200 3.600-1.800 3 .4-.3 1.200-1.800 2.400-2.800 3.400h3.300" fill="none" stroke="#444" stroke-width=".9"/><path d="M3.500 9c-1.500 2-1 4.500 1.500 4.800 2 .2 4-.8 5.500-2.300" fill="none" stroke="#222" stroke-width="1.100"/><path d="M12.200 .8l3 2.600-5.200 7.600-3.800 2 .7-4.200z" fill="#f2d23e" stroke="#2a2208" stroke-width=".9" stroke-linejoin="round"/><path d="M10.600 3l3.200 2.500" stroke="#2a2208" stroke-width=".8"/><path d="M6.200 13l.4-2.200 1.600 1.200z" fill="#111"/><path d="M12.200 .8l1.500 1.300-5.400 7.400-1.400-.7z" fill="#fbeea0" opacity=".8"/></svg>
<svg style="left:8.5px;top:329.0px;" width="18" height="18" viewBox="0 0 16 16"><path d="M2.500 1.500c-2.500 3-2 7 .2 10 1 1.500 2.500 2.300 4.300 2.300-3-2.500-4.800-6.500-2.200-11.300z" fill="#111"/><path d="M1.500 14.500c3 1 7 1 10.500-.3" fill="none" stroke="#111" stroke-width="1.300"/><path d="M10 3.500l4 1.500-.5 5-3.500 3.500-2.500-4z" fill="#f2d23e" stroke="#1a1405" stroke-width=".9" stroke-linejoin="round"/><path d="M10.500 13l.5-4.500" stroke="#1a1405" stroke-width=".8"/><path d="M10 3.500l1.300-2.700 3.700 1.500-1 2.700z" fill="#3a6cc0" stroke="#1a2a4a" stroke-width=".7"/><path d="M11.500 1l1 2.500" stroke="#e03030" stroke-width="1"/></svg>
<svg style="left:8.5px;top:352.7px;" width="18" height="18" viewBox="0 0 16 16"><path d="M5.300 1.500h3.600l4.800 13h-3.600l-.8-2.500h-4.600l-.8 2.500h-3.500zM7 5l-1.500 4.600h3z" fill="#111"/><path d="M12.800 1.500h2.800M14.200 1.500v13M12.800 14.500h2.800" stroke="#333" stroke-width=".8" fill="none"/></svg>
<svg style="left:8.5px;top:387.2px;" width="18" height="18" viewBox="0 0 16 16"><defs><linearGradient id="gr3" x1="0" y1="0" x2="1" y2="1"><stop offset="0" stop-color="#4ca24c"/><stop offset="1" stop-color="#d4efd0"/></linearGradient></defs><rect x="1" y="1.500" width="14" height="13" fill="url(#gr3)"/><path d="M4 4.500l8 7" stroke="#223" stroke-width="1"/><rect x="2.500" y="3" width="3" height="3" fill="#fff" stroke="#223" stroke-width=".8"/><rect x="10.500" y="10" width="3" height="3" fill="#fff" stroke="#223" stroke-width=".8"/></svg>
<svg style="left:8.5px;top:411.5px;" width="18" height="18" viewBox="0 0 16 16"><path d="M2.500 3.500q5.500 2 11-1 -1.500 5.500 0 10.500-5.500-2-11 0 1.500-5 0-9.500z" fill="#5aa890" stroke="#2a5a4c" stroke-width=".9"/><path d="M1 2h3v3h-3zM12 1h3v3h-3zM1 11.500h3v3h-3zM12 11.500h3v3h-3z" fill="#fff" stroke="#223" stroke-width=".8"/></svg>
<svg style="left:8.5px;top:434.9px;" width="18" height="18" viewBox="0 0 16 16"><path d="M14 2c1.200 1.200.8 2.500-.3 3.500l-1.500 1.300-3-3 1.300-1.500c1-1.100 2.300-1.500 3.500-.3z" fill="#222"/><path d="M9.500 4.500l2 2-6.500 6.500-2.500 1.500-1 .5.500-1 1.500-2.500z" fill="#cfe0f0" stroke="#223" stroke-width=".9"/><path d="M8 5l3 3" stroke="#222" stroke-width="1.800"/></svg>
<svg style="left:8.5px;top:458.3px;" width="18" height="18" viewBox="0 0 16 16"><path d="M4 4.500l8.500-1.500 1.500 8-7 2.500z" fill="#5f86b8" stroke="#2a4468" stroke-width=".9"/><path d="M4 4.500q4-3 8.500-1.500" fill="#bcd0e6" stroke="#2a4468" stroke-width=".8"/><path d="M4.500 5c-2.500 1.500-3 4-2.500 7" fill="none" stroke="#7fb08a" stroke-width="1.600"/><ellipse cx="6.500" cy="14" rx="5.500" ry="1.500" fill="#8fc79a"/></svg>
<svg style="left:8.5px;top:494.5px;" width="18" height="18" viewBox="0 0 16 16"><path d="M1 10c2-.5 3-2 3.500-4 .8-3 4-4.500 6.500-3 -1.500.5-2 2-1 3 1.500 1.500 3.500 2.500 5 2v2.500h-14z" fill="#8a8a8a"/><path d="M1 11.500h14v3h-14z" fill="#b5b5b5"/><path d="M1 11.500q3.500-1.500 7 0t7 0" fill="none" stroke="#666" stroke-width=".9"/></svg>
<svg style="left:8.5px;top:518.0px;" width="18" height="18" viewBox="0 0 16 16"><rect x="6.500" y="6" width="6.500" height="9" rx="1" fill="#6fb043" stroke="#2c4a16" stroke-width=".9" transform="rotate(-20 9.500 10.500)"/><path d="M5.800 4.500l3.500-1.300 1 2.300-3.600 1.300z" fill="#333"/><path d="M1 1.500h1.200M3 3h1.200M1 4.500h1.200M3.500 1h1M1.500 6.500h1" stroke="#222" stroke-width="1.100"/></svg>
<svg style="left:8.5px;top:540.5px;" width="18" height="18" viewBox="0 0 16 16"><path d="M8 1.500l5.500 2.500-4 10.500-5.500-2.500z" fill="#e98a8f" stroke="#55304a" stroke-width=".8"/><path d="M5.700 8.500l5.500 2.500-1.700 3.500-5.500-2.500z" fill="#4a63d8"/><path d="M1.500 14.800h12" stroke="#999" stroke-width="1"/></svg>
<svg style="left:8.5px;top:564.0px;" width="18" height="18" viewBox="0 0 16 16"><rect x="5.500" y="1" width="5" height="4.500" fill="#c9dbee" stroke="#2a4468" stroke-width=".9"/><rect x="1" y="10.500" width="5" height="4.500" fill="#c9dbee" stroke="#2a4468" stroke-width=".9"/><rect x="10" y="10.500" width="5" height="4.500" fill="#c9dbee" stroke="#2a4468" stroke-width=".9"/><path d="M8 5.500v2.500h-4.500v2.500M8 8h4.500v2.500" fill="none" stroke="#2a4468" stroke-width="1"/><rect x="6.300" y="7" width="3.400" height="2.200" fill="#f0b92d"/></svg>
<svg style="left:8.5px;top:596.7px;" width="18" height="18" viewBox="0 0 16 16"><circle cx="6.500" cy="6.500" r="5" fill="#e4f0fa" stroke="#6a7f94" stroke-width="1.500"/><path d="M10.300 10.300l4.200 4.200" stroke="#e0a030" stroke-width="2.600" stroke-linecap="round"/><path d="M10 10l1.300 1.300" stroke="#555" stroke-width="1.600"/></svg>
<svg style="left:8.5px;top:622.3px;" width="18" height="18" viewBox="0 0 16 16"><path d="M4.500 1l9 10.500-3 3-9-10.500z" fill="#e3b7a0" stroke="#5a3a30" stroke-width=".9" transform="rotate(8 8 8)"/><path d="M4.500 5.500l1.500-1.300M6.300 7.600l1.500-1.300M8.100 9.700l1.500-1.300M9.900 11.800l1.500-1.300" stroke="#5a3a30" stroke-width=".7"/></svg>
<div style="left:4px;top:145.1px;width:29px;height:1px;background:#e2deda;"></div>
<div style="left:4px;top:273.5px;width:29px;height:1px;background:#e2deda;"></div>
<div style="left:4px;top:378.5px;width:29px;height:1px;background:#e2deda;"></div>
<div style="left:4px;top:484.5px;width:29px;height:1px;background:#e2deda;"></div>
<div style="left:4px;top:589.5px;width:29px;height:1px;background:#e2deda;"></div>
<div style="left:49px;top:103px;width:574.2px;height:566.8px;background:#ffffff;"></div>
<svg style="left:0;top:0" width="1000" height="728" viewBox="0 0 1000 728"><path d="M52.0 90.7V102.5M56.3 99.4V102.5M60.6 99.4V102.5M64.9 99.4V102.5M69.2 99.4V102.5M73.6 96.5V102.5M77.9 99.4V102.5M82.2 99.4V102.5M86.5 99.4V102.5M90.8 99.4V102.5M95.1 90.7V102.5M99.5 99.4V102.5M103.8 99.4V102.5M108.1 99.4V102.5M112.4 99.4V102.5M116.7 96.5V102.5M121.0 99.4V102.5M125.4 99.4V102.5M129.7 99.4V102.5M134.0 99.4V102.5M138.3 90.7V102.5M142.6 99.4V102.5M146.9 99.4V102.5M151.2 99.4V102.5M155.6 99.4V102.5M159.9 96.5V102.5M164.2 99.4V102.5M168.5 99.4V102.5M172.8 99.4V102.5M177.1 99.4V102.5M181.5 90.7V102.5M185.8 99.4V102.5M190.1 99.4V102.5M194.4 99.4V102.5M198.7 99.4V102.5M203.0 96.5V102.5M207.4 99.4V102.5M211.7 99.4V102.5M216.0 99.4V102.5M220.3 99.4V102.5M224.6 90.7V102.5M228.9 99.4V102.5M233.3 99.4V102.5M237.6 99.4V102.5M241.9 99.4V102.5M246.2 96.5V102.5M250.5 99.4V102.5M254.8 99.4V102.5M259.2 99.4V102.5M263.5 99.4V102.5M267.8 90.7V102.5M272.1 99.4V102.5M276.4 99.4V102.5M280.7 99.4V102.5M285.1 99.4V102.5M289.4 96.5V102.5M293.7 99.4V102.5M298.0 99.4V102.5M302.3 99.4V102.5M306.6 99.4V102.5M311.0 90.7V102.5M315.3 99.4V102.5M319.6 99.4V102.5M323.9 99.4V102.5M328.2 99.4V102.5M332.5 96.5V102.5M336.8 99.4V102.5M341.2 99.4V102.5M345.5 99.4V102.5M349.8 99.4V102.5M354.1 90.7V102.5M358.4 99.4V102.5M362.7 99.4V102.5M367.1 99.4V102.5M371.4 99.4V102.5M375.7 96.5V102.5M380.0 99.4V102.5M384.3 99.4V102.5M388.6 99.4V102.5M393.0 99.4V102.5M397.3 90.7V102.5M401.6 99.4V102.5M405.9 99.4V102.5M410.2 99.4V102.5M414.5 99.4V102.5M418.9 96.5V102.5M423.2 99.4V102.5M427.5 99.4V102.5M431.8 99.4V102.5M436.1 99.4V102.5M440.4 90.7V102.5M444.8 99.4V102.5M449.1 99.4V102.5M453.4 99.4V102.5M457.7 99.4V102.5M462.0 96.5V102.5M466.3 99.4V102.5M470.7 99.4V102.5M475.0 99.4V102.5M479.3 99.4V102.5M483.6 90.7V102.5M487.9 99.4V102.5M492.2 99.4V102.5M496.5 99.4V102.5M500.9 99.4V102.5M505.2 96.5V102.5M509.5 99.4V102.5M513.8 99.4V102.5M518.1 99.4V102.5M522.4 99.4V102.5M526.8 90.7V102.5M531.1 99.4V102.5M535.4 99.4V102.5M539.7 99.4V102.5M544.0 99.4V102.5M548.3 96.5V102.5M552.7 99.4V102.5M557.0 99.4V102.5M561.3 99.4V102.5M565.6 99.4V102.5M569.9 90.7V102.5M574.2 99.4V102.5M578.6 99.4V102.5M582.9 99.4V102.5M587.2 99.4V102.5M591.5 96.5V102.5M595.8 99.4V102.5M600.1 99.4V102.5M604.5 99.4V102.5M608.8 99.4V102.5M613.1 90.7V102.5M617.4 99.4V102.5M621.7 99.4V102.5" stroke="#333" stroke-width="0.9" fill="none"/><path d="M48.5 102.6H623.2" stroke="#2a2a2a" stroke-width="1.3"/><text x="53.6" y="96" font-size="4.6" fill="#333" font-family="Liberation Sans,sans-serif">-50</text><text x="96.7" y="96" font-size="4.6" fill="#333" font-family="Liberation Sans,sans-serif">-25</text><text x="139.9" y="96" font-size="4.6" fill="#333" font-family="Liberation Sans,sans-serif">0</text><text x="183.1" y="96" font-size="4.6" fill="#333" font-family="Liberation Sans,sans-serif">25</text><text x="226.2" y="96" font-size="4.6" fill="#333" font-family="Liberation Sans,sans-serif">50</text><text x="269.4" y="96" font-size="4.6" fill="#333" font-family="Liberation Sans,sans-serif">75</text><text x="312.6" y="96" font-size="4.6" fill="#333" font-family="Liberation Sans,sans-serif">100</text><text x="355.7" y="96" font-size="4.6" fill="#333" font-family="Liberation Sans,sans-serif">125</text><text x="398.9" y="96" font-size="4.6" fill="#333" font-family="Liberation Sans,sans-serif">150</text><text x="442.0" y="96" font-size="4.6" fill="#333" font-family="Liberation Sans,sans-serif">175</text><text x="485.2" y="96" font-size="4.6" fill="#333" font-family="Liberation Sans,sans-serif">200</text><text x="528.4" y="96" font-size="4.6" fill="#333" font-family="Liberation Sans,sans-serif">225</text><text x="571.5" y="96" font-size="4.6" fill="#333" font-family="Liberation Sans,sans-serif">250</text><text x="614.7" y="96" font-size="4.6" fill="#333" font-family="Liberation Sans,sans-serif">275</text><path d="M45.3 104.4H48.9M45.3 108.7H48.9M42.5 113.0H48.9M45.3 117.3H48.9M45.3 121.6H48.9M45.3 125.9H48.9M45.3 130.2H48.9M37.2 134.5H48.9M45.3 138.8H48.9M45.3 143.1H48.9M45.3 147.4H48.9M45.3 151.7H48.9M42.5 156.0H48.9M45.3 160.3H48.9M45.3 164.6H48.9M45.3 168.9H48.9M45.3 173.2H48.9M37.2 177.5H48.9M45.3 181.8H48.9M45.3 186.1H48.9M45.3 190.4H48.9M45.3 194.8H48.9M42.5 199.1H48.9M45.3 203.4H48.9M45.3 207.7H48.9M45.3 212.0H48.9M45.3 216.3H48.9M37.2 220.6H48.9M45.3 224.9H48.9M45.3 229.2H48.9M45.3 233.5H48.9M45.3 237.8H48.9M42.5 242.1H48.9M45.3 246.4H48.9M45.3 250.7H48.9M45.3 255.0H48.9M45.3 259.3H48.9M37.2 263.6H48.9M45.3 267.9H48.9M45.3 272.2H48.9M45.3 276.5H48.9M45.3 280.8H48.9M42.5 285.1H48.9M45.3 289.4H48.9M45.3 293.7H48.9M45.3 298.0H48.9M45.3 302.3H48.9M37.2 306.6H48.9M45.3 311.0H48.9M45.3 315.3H48.9M45.3 319.6H48.9M45.3 323.9H48.9M42.5 328.2H48.9M45.3 332.5H48.9M45.3 336.8H48.9M45.3 341.1H48.9M45.3 345.4H48.9M37.2 349.7H48.9M45.3 354.0H48.9M45.3 358.3H48.9M45.3 362.6H48.9M45.3 366.9H48.9M42.5 371.2H48.9M45.3 375.5H48.9M45.3 379.8H48.9M45.3 384.1H48.9M45.3 388.4H48.9M37.2 392.7H48.9M45.3 397.0H48.9M45.3 401.3H48.9M45.3 405.6H48.9M45.3 409.9H48.9M42.5 414.2H48.9M45.3 418.5H48.9M45.3 422.9H48.9M45.3 427.2H48.9M45.3 431.5H48.9M37.2 435.8H48.9M45.3 440.1H48.9M45.3 444.4H48.9M45.3 448.7H48.9M45.3 453.0H48.9M42.5 457.3H48.9M45.3 461.6H48.9M45.3 465.9H48.9M45.3 470.2H48.9M45.3 474.5H48.9M37.2 478.8H48.9M45.3 483.1H48.9M45.3 487.4H48.9M45.3 491.7H48.9M45.3 496.0H48.9M42.5 500.3H48.9M45.3 504.6H48.9M45.3 508.9H48.9M45.3 513.2H48.9M45.3 517.5H48.9M37.2 521.8H48.9M45.3 526.1H48.9M45.3 530.4H48.9M45.3 534.7H48.9M45.3 539.1H48.9M42.5 543.4H48.9M45.3 547.7H48.9M45.3 552.0H48.9M45.3 556.3H48.9M45.3 560.6H48.9M37.2 564.9H48.9M45.3 569.2H48.9M45.3 573.5H48.9M45.3 577.8H48.9M45.3 582.1H48.9M42.5 586.4H48.9M45.3 590.7H48.9M45.3 595.0H48.9M45.3 599.3H48.9M45.3 603.6H48.9M37.2 607.9H48.9M45.3 612.2H48.9M45.3 616.5H48.9M45.3 620.8H48.9M45.3 625.1H48.9M42.5 629.4H48.9M45.3 633.7H48.9M45.3 638.0H48.9M45.3 642.3H48.9M45.3 646.6H48.9M37.2 651.0H48.9M45.3 655.3H48.9M45.3 659.6H48.9M45.3 663.9H48.9M45.3 668.2H48.9" stroke="#333" stroke-width="0.9" fill="none"/><path d="M48.9 102.1V669.8" stroke="#2a2a2a" stroke-width="1.3"/><text transform="translate(44.3,136.0) rotate(-90)" text-anchor="end" font-size="4.4" fill="#333" font-family="Liberation Sans,sans-serif">0</text><text transform="translate(44.3,179.0) rotate(-90)" text-anchor="end" font-size="4.4" fill="#333" font-family="Liberation Sans,sans-serif">25</text><text transform="translate(44.3,222.1) rotate(-90)" text-anchor="end" font-size="4.4" fill="#333" font-family="Liberation Sans,sans-serif">50</text><text transform="translate(44.3,265.1) rotate(-90)" text-anchor="end" font-size="4.4" fill="#333" font-family="Liberation Sans,sans-serif">75</text><text transform="translate(44.3,308.1) rotate(-90)" text-anchor="end" font-size="4.4" fill="#333" font-family="Liberation Sans,sans-serif">100</text><text transform="translate(44.3,351.2) rotate(-90)" text-anchor="end" font-size="4.4" fill="#333" font-family="Liberation Sans,sans-serif">125</text><text transform="translate(44.3,394.2) rotate(-90)" text-anchor="end" font-size="4.4" fill="#333" font-family="Liberation Sans,sans-serif">150</text><text transform="translate(44.3,437.3) rotate(-90)" text-anchor="end" font-size="4.4" fill="#333" font-family="Liberation Sans,sans-serif">175</text><text transform="translate(44.3,480.3) rotate(-90)" text-anchor="end" font-size="4.4" fill="#333" font-family="Liberation Sans,sans-serif">200</text><text transform="translate(44.3,523.3) rotate(-90)" text-anchor="end" font-size="4.4" fill="#333" font-family="Liberation Sans,sans-serif">225</text><text transform="translate(44.3,566.4) rotate(-90)" text-anchor="end" font-size="4.4" fill="#333" font-family="Liberation Sans,sans-serif">250</text><text transform="translate(44.3,609.4) rotate(-90)" text-anchor="end" font-size="4.4" fill="#333" font-family="Liberation Sans,sans-serif">275</text><text transform="translate(44.3,652.5) rotate(-90)" text-anchor="end" font-size="4.4" fill="#333" font-family="Liberation Sans,sans-serif">300</text></svg>
<svg style="left:37.3px;top:90.8px;" width="11" height="11" viewBox="0 0 16 16"><defs><linearGradient id="lk" x1="0" y1="0" x2="1" y2="1"><stop offset="0" stop-color="#e8900c"/><stop offset=".6" stop-color="#f6c838"/><stop offset="1" stop-color="#fbe468"/></linearGradient></defs><path d="M4.700 7.200v-2.300a3.300 3.300 0 0 1 6.600 0v2.300" fill="none" stroke="#1a1a1a" stroke-width="2.700"/><path d="M4.700 7.200v-2.300a3.300 3.300 0 0 1 6.600 0v2.300" fill="none" stroke="#dcdcdc" stroke-width=".9"/><rect x="2.300" y="7" width="11.400" height="7.900" rx="1" fill="url(#lk)" stroke="#3a2606" stroke-width="1.200"/><rect x="7.250" y="8.700" width="1.500" height="4" fill="#2a1a04"/></svg>
<svg style="left:44.5px;top:445.5px;" width="4" height="6" viewBox="0 0 4 6"><path d="M0 0l4 3-4 3z" fill="#222"/></svg>
<div style="left:623.2px;top:102.6px;width:13.2px;height:579.7px;background:#cecece;"></div>
<div style="left:623.5px;top:91px;width:11.5px;height:11.5px;background:linear-gradient(#f8f7f6,#e9e7e5);border:1px solid #c4bfba;border-radius:2.500px;"></div>
<svg style="left:627px;top:94px;" width="5" height="6" viewBox="0 0 5 6"><path d="M0.500 5.500V.5h3.500v5M1.800 2v2.500" stroke="#666" stroke-width=".7" fill="none"/></svg>
<div style="left:627.5px;top:276.5px;width:4.2px;height:215.8px;background:#7f7f7f;border-radius:2.100px;"></div>
<div style="left:38px;top:669.8px;width:598.4px;height:12.5px;background:#cecece;"></div>
<div style="left:625.5px;top:670.8px;width:10.5px;height:10.8px;background:linear-gradient(135deg,#f4f4f4 40%,#d8f0d8 55%,#e8d8f4 75%,#f4e0e0);border-radius:1px;"></div>
<div style="left:0px;top:669.8px;width:49px;height:12.5px;background:#f5f3f1;"></div>
<div style="left:207px;top:673.8px;width:274.7px;height:3.6px;background:#7d7d7d;border-radius:2px;"></div>
<svg style="left:0;top:0" width="1000" height="728" viewBox="0 0 1000 728"><defs><clipPath id="cv"><rect x="49" y="103" width="574" height="566.5"/></clipPath><filter id="bl" x="-10%" y="-20%" width="120%" height="140%"><feGaussianBlur stdDeviation="3.2"/></filter><filter id="bl2" x="-10%" y="-20%" width="120%" height="140%"><feGaussianBlur stdDeviation="2.7"/></filter></defs><g clip-path="url(#cv)">
<g id="sketch"><rect x="138.5" y="134.5" width="362" height="511.3" fill="none" stroke="#6f6f6f" stroke-width="0.9"/><path d="M501 136V648" stroke="#4d4d4d" stroke-width="2.2"/><path d="M140 647H502" stroke="#4d4d4d" stroke-width="2.400"/><path d="M245.600 116.500C250 124 254 130 256.600 135.700C263 148 269 160 275.800 171.400C280 179 285 185 289.600 185.700C293 186 295 184 297.800 181C305 174 312 167 319.800 160.400C327 154 333 148 339 141.200C343 136 346 132 348 128" fill="none" stroke="#fbdcca" stroke-width="1.1" stroke-opacity="0.55" stroke-linecap="round" stroke-linejoin="round"/><path d="M341 141C340.500 150 341 160 342.400 168.700C344 178 347 187 352 193.400C355 197 358 198.500 361.600 198.400C367 198 373 195 378 192.900C379 197 379.500 201 380.800 204.400C385 214 391 222 398.700 229C405 235 412 240 420.700 242.900C427 245 433 245.500 440 245" fill="none" stroke="#fbdcca" stroke-width="1.1" stroke-opacity="0.55" stroke-linecap="round" stroke-linejoin="round"/><path d="M501.700 203C491 211 481 220 472.900 229C465 238 458 247 455 256.600C453.500 262 454 268 456.400 273C460 278 466 279.500 472.900 280C487 282.500 502 285.500 516.800 288.200" fill="none" stroke="#fbdcca" stroke-width="1.1" stroke-opacity="0.55" stroke-linecap="round" stroke-linejoin="round"/><path d="M354.700 413.600C356 395 357.500 377 357.500 358.700C357.500 339 357.500 320 357.500 300C357.500 281 358 262 359.700 242.900C363 241 367 240.500 371.200 240.700C373 243 374 245.500 374.500 248.400C374.500 266 374 283 374 300C373.500 310 371.500 320 371.200 331.200C372 354 375 377 376.700 400" fill="none" stroke="#fbdcca" stroke-width="1.1" stroke-opacity="0.6" stroke-linecap="round" stroke-linejoin="round"/><path d="M398.700 300C399 292 399.500 284 400 275.800C402 272 405.500 271 409.700 270.900C425 272 441 274.500 456.400 277.200" fill="none" stroke="#fbdcca" stroke-width="1.1" stroke-opacity="0.55" stroke-linecap="round" stroke-linejoin="round"/><path d="M400.900 290C400.900 303 400.500 316 400.900 328.500C403 338 407 346 412.400 353.200C418 361 426 367 434.400 372.400C443 376.500 452 379 461.900 380.700C478 383.500 495 386.500 511.300 388.900" fill="none" stroke="#fbdcca" stroke-width="1.1" stroke-opacity="0.6" stroke-linecap="round" stroke-linejoin="round"/><path d="M117 310.600C129 304 142 298 155 294C167 290.500 179 288.500 190.700 288C202 288 213 288.500 223.600 291.400C232 294.500 239.500 300 245.600 306.500C254 316 260 326 264.800 336.700C270 348 273 360 273 372.400C273 384 270.500 395 264.800 405.400C260.500 412.500 255 418 248.400 421.900C234.500 428 219.500 432 204.400 435.600" fill="none" stroke="#fbdcca" stroke-width="2.08" stroke-opacity="0.97" stroke-linecap="round" stroke-linejoin="round"/><path d="M275.800 351.800C285 355.500 294.500 359.500 303.300 364.200C312 369 321 374 328 380.700C330.500 384.500 331.500 388.500 332 393" fill="none" stroke="#fbdcca" stroke-width="1.82" stroke-opacity="0.92" stroke-linecap="round" stroke-linejoin="round"/><path d="M350 383.400C341 384 333.500 386.500 328 391.600C322 397.500 318.500 405 317 413.600C315.500 423 317 432 319.800 441C323 453 328 465 333.500 476.800C335.500 481 337 486 339 490" fill="none" stroke="#fbdcca" stroke-width="2.08" stroke-opacity="0.97" stroke-linecap="round" stroke-linejoin="round"/><path d="M330 386.200C337 384 344.500 383.400 352 383.400C360 383.400 368.500 383.500 376.700 384.800C383.500 390.500 389 397.500 393.200 405.400C399.500 416 404.500 427 407 438.400C408 449 406.500 459 402.800 468.600C398 475 392 479.500 385 482.300C381 485 377.500 487.500 374 490" fill="none" stroke="#fbdcca" stroke-width="2.08" stroke-opacity="0.97" stroke-linecap="round" stroke-linejoin="round"/><path d="M404.200 419C409.500 413 416 408 423.400 406.800C432 406.800 440 411.500 445.400 419C450.500 427.500 452.300 437 452.300 446.600C452 456.500 450 466 445.400 474C440.500 480 434 484 426.200 485C419 485 412.500 482 407 476.800" fill="none" stroke="#fbdcca" stroke-width="1.43" stroke-opacity="0.82" stroke-linecap="round" stroke-linejoin="round"/><path d="M497.600 388.900C488.500 392.500 480 398 472.900 405.400C465 413.500 458 422.500 453.600 432.900C451.500 442 451.500 451.500 453.600 460.300C456.500 468 461 474.500 467.400 479.600C476 483.500 485.500 485.600 494.800 485.600C501 484.500 507 481.500 511.300 476.800" fill="none" stroke="#fbdcca" stroke-width="1.43" stroke-opacity="0.82" stroke-linecap="round" stroke-linejoin="round"/><path d="M486.600 390.300C479 392 471.500 394 464.600 397.100C460 407.500 457 418.500 455 430M455 430l-2-5M455 430l4-3" fill="none" stroke="#fbdcca" stroke-width="1.43" stroke-opacity="0.82" stroke-linecap="round" stroke-linejoin="round"/><path d="M174.200 350.400C178.500 364.500 182.500 379.500 185 394.400C187.500 407 189.500 420 190.700 432.900" fill="none" stroke="#fbdcca" stroke-width="1.43" stroke-opacity="0.87" stroke-linecap="round" stroke-linejoin="round"/><path d="M201.600 353C197.500 368.500 193.500 384 192 400C191.500 412 192.500 424 193.400 435.600C194.500 442 195 448.500 194.800 454.800C193.500 466.500 191 478.500 188 490" fill="none" stroke="#fbdcca" stroke-width="1.43" stroke-opacity="0.87" stroke-linecap="round" stroke-linejoin="round"/><path d="M161.800 362.800C162.500 377 163.500 391.500 166 405.400C172 420.500 180 435 188 449.300" fill="none" stroke="#fbdcca" stroke-width="1.43" stroke-opacity="0.82" stroke-linecap="round" stroke-linejoin="round"/><path d="M215.400 379.300C208.500 398 201 417 193.400 435.600" fill="none" stroke="#fbdcca" stroke-width="1.43" stroke-opacity="0.82" stroke-linecap="round" stroke-linejoin="round"/><path d="M146.700 428.700C146.500 441 147.500 453.500 150.800 465.800C153 474 156 482 159 490L165 503" fill="none" stroke="#fbdcca" stroke-width="1.43" stroke-opacity="0.82" stroke-linecap="round" stroke-linejoin="round"/><path d="M218 439.700C218.500 448.500 218.500 457.500 216.800 465.800C214 474.500 210 482.500 205.800 490" fill="none" stroke="#fbdcca" stroke-width="1.43" stroke-opacity="0.82" stroke-linecap="round" stroke-linejoin="round"/><path d="M225 440.500C233.500 448.500 243 456 253.800 461.700C262 464 270.500 465 278.600 464.500C287.500 463.500 296 461.500 303.300 457.600C309.500 453.500 315 449 319.800 443.800" fill="none" stroke="#fbdcca" stroke-width="1.3" stroke-opacity="0.72" stroke-linecap="round" stroke-linejoin="round"/><path d="M253.800 441C247.500 450.500 242 461 237.400 471.300C235 477.500 233 484 231.900 490L230 502" fill="none" stroke="#fbdcca" stroke-width="1.43" stroke-opacity="0.82" stroke-linecap="round" stroke-linejoin="round"/><path d="M258 446.600C252 453.500 247 461 242.900 468.600" fill="none" stroke="#fbdcca" stroke-width="1.43" stroke-opacity="0.82" stroke-linecap="round" stroke-linejoin="round"/><path d="M190.700 483.700C243 484 297 485 350 486.400C400 487.500 450 487 500 485" fill="none" stroke="#fbdcca" stroke-width="1.56" stroke-opacity="0.87" stroke-linecap="round" stroke-linejoin="round"/><path d="M281.300 490C282.500 481.500 285 473 289.600 465.800C298.500 460.500 309 457.500 319.800 456.200" fill="none" stroke="#fbdcca" stroke-width="1.3" stroke-opacity="0.72" stroke-linecap="round" stroke-linejoin="round"/><path d="M352 445V490M366 447V490" fill="none" stroke="#fbdcca" stroke-width="1.43" stroke-opacity="0.82" stroke-linecap="round" stroke-linejoin="round"/><path d="M180 486V555M184.500 486V557M188.500 486C189 505 188.500 530 187 554" fill="none" stroke="#fbdcca" stroke-width="1.69" stroke-opacity="0.97" stroke-linecap="round" stroke-linejoin="round"/><path d="M186 395V470M189 380V470M183 410V470" fill="none" stroke="#fbdcca" stroke-width="1.17" stroke-opacity="0.67" stroke-linecap="round" stroke-linejoin="round"/><path d="M300 470C320 476 350 480 380 478M420 470C440 478 470 480 500 474" fill="none" stroke="#fbdcca" stroke-width="1.3" stroke-opacity="0.62" stroke-linecap="round" stroke-linejoin="round"/><path d="M462 400l5 60M470 395l6 70M446 410l4 40" fill="none" stroke="#fbdcca" stroke-width="1.04" stroke-opacity="0.52" stroke-linecap="round" stroke-linejoin="round"/></g>
<path d="M139 498.700C150 498 160 498.200 170 499.500C185 501 198 502.200 210 503C228 505 245 507.500 262 509.500L540 545C546 548 548 553 546 560C544 566 537 570 536 579C536 590 540 600 545.200 608C546 610 546 612 545 613.800C541 622 530 629 521.700 633.600C527 638 527 650 520 655C513 660 500 661.500 488.600 661.500C440 661.500 380 662 330 661C285 658.500 240 654 200 650.800C189 650 178 649 168 648C158 647 148 646 139 644.800C132 644 126 642.500 120 640.400C108 636 99.500 631 99.200 622.900C98.500 612 108 606 117 603.600C100 600 93 590 93.700 580.300C94 570 100 564 107.500 562.400C99 558 98 550 99.200 546C100 540 102 537 103.400 535C97 531 96 525 97 521C98 508 108 501 118.500 500.600C125 499.500 132 498.700 139 498.700Z" fill="#b09983"/>
<path d="M520 548C540 540 550 548 547 556C545 562 540 566 530 566Z" fill="#b09983"/>
<path d="M277.800 501.400C300 500 330 503.400 360 503C420 502 480 504 535 501.800C543 501 549 506 544 511C541 513 539 514 537.800 514.800C545 517 548 523 543 527.500C541 530 539.500 532 539 533.300C543 536 544.500 540 542 543.200C541 546 541 549 542 552C547 555 549 560 546.400 566C544 572 540 576 537.800 579.100C544 582 548 589 545.200 596C544 601 542 604 539 605C535 607 531 606.800 526.600 606.300C515 606 500 604 480 601C440 594 400 588 360 584C335 581 315 579 299.800 576C285 571 274 566 266.800 562.400C258 558 253 552 251.700 546C247 541 248 534 250.300 529.500C248 521 254 513 262.700 508.800C266 504 272 502 277.800 501.400Z" fill="#c3c77c"/>
<path d="M262 554C270 550 280 547.500 289.400 545.400C297 542 304 538 311 534C320 532 330 531 339 529.800C344 527 348 524 352.500 522.400C370 522.500 386 523.500 400 525.500C420 528 440 530 460 531.500C480 532.500 500 530 516 528C524 529 528 532 528 536C525 546 515 555 516.500 562.400C520 572 538 580 541 590C541 597 538 602 532.500 604C505 601 475 598 447.400 594C428 590 410 586 392.400 583C365 579 337 575 310 570.700C297 568 284 566 272.300 562.400C266 560 262 557 262 554Z" fill="#728446" filter="url(#bl2)"/>
<path d="M117 508.800C148 507.800 179 506.600 210 505.600C230 505 250 504.300 270 503.600C290 502.800 310 501.800 330 501" fill="none" stroke="#fbdccb" stroke-width="2.1" stroke-opacity="1" stroke-linecap="round" stroke-linejoin="round"/><path d="M330 501C350 501.500 365 503.500 380 504.500C420 505 460 504 505 506" fill="none" stroke="#fbdccb" stroke-width="1.3" stroke-opacity="0.85" stroke-linecap="round" stroke-linejoin="round"/><path d="M106 576C107 572.500 108.500 569.500 110 566.500C118 563 126.500 560.500 135 559C140.500 559 146 560.500 151.400 561.900C155 563.500 158 566 161 568C164 568 167 566.500 169.300 565.700C170 569 168.500 572.500 168 576C169.500 577.500 171.500 577.800 173.400 577.500C188 575.500 203 572.500 217.400 569.300C225 566.500 232.500 563.500 240 560.700C245.500 558 251 555.500 256 553C261.500 551 267 549.500 273 548C278.500 546.500 284 545 289.400 543.400C293 541.500 296.500 540 300 538C303.500 536 307 534 310.800 531.900C315.500 530.800 320 530 325 529.500C329.500 529 334.500 528.500 338.800 527.800C341.500 526.500 344 525 346 523.500C348 522.300 350 521.200 352 520.400C356.500 520.300 361 520.400 366 520.600C370.500 520.800 375.500 521 380 521.200C386.500 522 393 522.800 400 523.700C406.500 524.800 413 525.800 420 526.700C440 528.500 460 530 480.300 530.800C492.500 529.500 504.500 527 516 524" fill="none" stroke="#f8dcc8" stroke-width="1.7" stroke-opacity="1" stroke-linecap="round" stroke-linejoin="round"/><path d="M180 499V552.800M185.800 499V555.500M190 499C189.500 517 188.500 536 187 554" fill="none" stroke="#fbdccb" stroke-width="1.3" stroke-opacity="0.95" stroke-linecap="round" stroke-linejoin="round"/><path d="M256.500 552.500C254 548 252.500 543 252.400 537.700C252.500 532 254.500 527 258 522.800C262 519 267 516.800 273 515.400C286.500 513 300 511.200 314 509.700C327.500 508.300 341.500 507.200 355.300 506.400C363.500 505.800 372 505.300 380 505" fill="none" stroke="#f3dfc6" stroke-width="1.5" stroke-opacity="0.95" stroke-linecap="round" stroke-linejoin="round"/><path d="M256.500 552.500C261.500 556.500 267 559.800 273 562.400C284 565 295 567 306 569C322.500 571.500 339 574 355.300 577.200C370 578.800 385 580.200 400 582C416 585.500 432 590 447.400 594C467 596.500 487 598.500 506.400 599.500" fill="none" stroke="#f3dfc6" stroke-width="1.5" stroke-opacity="0.95" stroke-linecap="round" stroke-linejoin="round"/><path d="M418 513c1-1.500 2.500-2 3.500-.5c.8 1.200 2 1.800 3.500 2.500v3M419 514l1.500 3" fill="none" stroke="#e4e6c0" stroke-width="0.8" stroke-opacity="0.7" stroke-linecap="round" stroke-linejoin="round"/><path d="M395 584C410 584 425 587 440 591" fill="none" stroke="#eef0d8" stroke-width="0.8" stroke-opacity="0.7" stroke-linecap="round" stroke-linejoin="round"/>
</g></svg>
<div style="left:636.3px;top:90.2px;width:332.4px;height:592px;background:#f5f3f1;border-left:1px solid #dedad6;border-right:1px solid #e6e3e0;"></div>
<div style="left:639.6px;top:89.5px;width:326px;height:22px;background:#dbd7d3;border:1px solid #cfcac5;border-bottom:none;"></div>
<span class="t" style="transform:scaleX(1.016);left:654px;transform-origin:0 50%;top:91.00px;font-size:8.5px;color:#2e3436;font-weight:700;">移動<span style="font-size:1.06em">(M)</span></span>
<span class="t" style="transform:scaleX(0.967);left:706px;transform-origin:0 50%;top:91.00px;font-size:8.5px;color:#8e8d8b;font-weight:500;">拡大縮小<span style="font-size:1.06em">(S)</span></span>
<span class="t" style="transform:scaleX(0.966);left:773px;transform-origin:0 50%;top:91.00px;font-size:8.5px;color:#8e8d8b;font-weight:500;">回転<span style="font-size:1.06em">(R)</span></span>
<span class="t" style="transform:scaleX(0.936);left:824.5px;transform-origin:0 50%;top:91.00px;font-size:8.5px;color:#8e8d8b;font-weight:500;">傾斜<span style="font-size:1.06em">(W)</span></span>
<span class="t" style="transform:scaleX(0.967);left:878px;transform-origin:0 50%;top:91.00px;font-size:8.5px;color:#8e8d8b;font-weight:500;">変形行列<span style="font-size:1.06em">(X)</span></span>
<div style="left:645.8px;top:109.3px;width:46px;height:2.2px;background:#3180e0;"></div>
<div style="left:639.6px;top:111.5px;width:326px;height:73px;background:#ffffff;border:1px solid #d5d0cc;border-top:none;"></div>
<svg style="left:646.5px;top:118.5px;" width="19" height="16" viewBox="0 0 19 16"><rect x=".5" y=".5" width="5.500" height="5.500" fill="#dfe8f1" stroke="#8a97a5" stroke-width=".8"/><rect x="9" y=".5" width="5.500" height="5.500" fill="#b9cde4" stroke="#3f4d5c" stroke-width=".9"/><path d="M3 10.500h9" stroke="#222" stroke-width="1"/><path d="M11.500 8.500l3 2-3 2z" fill="#222"/></svg>
<span class="t" style="transform:scaleX(0.968);left:668px;transform-origin:0 50%;top:119.50px;font-size:8.5px;color:#5c6163;font-weight:500;">水平<span style="font-size:1.06em">(H):</span></span>
<div style="left:703.5px;top:115px;width:79.0px;height:22.5px;background:#ffffff;border:1px solid #d6d1cc;border-radius:3px;"></div>
<div style="left:758.5px;top:116px;width:1px;height:20.5px;background:#eeebe8;"></div>
<div style="left:770.5px;top:116px;width:1px;height:20.5px;background:#eeebe8;"></div>
<span class="t" style="left:706.5px;transform-origin:0 50%;top:119.55px;font-size:8.79px;color:#2e3436;font-weight:400;">0.000</span>
<div style="left:761.0px;top:125.75px;width:7px;height:1.2px;background:#2e3436;"></div>
<div style="left:773.0px;top:125.75px;width:7px;height:1.2px;background:#2e3436;"></div>
<div style="left:775.9px;top:122.85px;width:1.2px;height:7px;background:#2e3436;"></div>
<div style="left:789.6px;top:114.3px;width:41.60000000000002px;height:23.10000000000001px;background:linear-gradient(#f7f6f5,#ecebe9);border:1px solid #d6d1cc;border-radius:3px;box-shadow:0 1px 0 rgba(0,0,0,.04);"></div>
<span class="t" style="left:798px;transform-origin:0 50%;top:119.00px;font-size:8.79px;color:#2e3436;font-weight:400;">mm</span>
<svg style="left:814.5px;top:124.3px;" width="7" height="4" viewBox="0 0 7 4"><path d="M0 0h7l-3.500 4z" fill="#2e3436"/></svg>
<svg style="left:647.5px;top:145px;" width="15" height="17" viewBox="0 0 15 17"><rect x=".5" y=".5" width="5.500" height="5.500" fill="#dfe8f1" stroke="#8a97a5" stroke-width=".8"/><rect x=".5" y="9.500" width="5.500" height="5.500" fill="#9fb8d4" stroke="#2f3d4c" stroke-width="1"/><path d="M10.500 3v9" stroke="#222" stroke-width="1"/><path d="M8.500 11.500l2 3 2-3z" fill="#222"/></svg>
<span class="t" style="transform:scaleX(0.984);left:668px;transform-origin:0 50%;top:146.30px;font-size:8.5px;color:#5c6163;font-weight:500;">垂直<span style="font-size:1.06em">(V):</span></span>
<div style="left:703.5px;top:141.7px;width:79.0px;height:22.700000000000017px;background:#ffffff;border:1px solid #d6d1cc;border-radius:3px;"></div>
<div style="left:758.5px;top:142.7px;width:1px;height:20.700000000000017px;background:#eeebe8;"></div>
<div style="left:770.5px;top:142.7px;width:1px;height:20.700000000000017px;background:#eeebe8;"></div>
<span class="t" style="left:706.5px;transform-origin:0 50%;top:146.35px;font-size:8.79px;color:#2e3436;font-weight:400;">0.000</span>
<div style="left:761.0px;top:152.55px;width:7px;height:1.2px;background:#2e3436;"></div>
<div style="left:773.0px;top:152.55px;width:7px;height:1.2px;background:#2e3436;"></div>
<div style="left:775.9px;top:149.65px;width:1.2px;height:7px;background:#2e3436;"></div>
<div style="left:645.8px;top:169.5px;width:10.9px;height:10.9px;background:#3180e0;border:1px solid #2a6fc8;border-radius:2.500px;"></div>
<svg style="left:647.3px;top:171.3px;" width="8" height="7.5" viewBox="0 0 8 7.5"><path d="M1 3.800l2.200 2.300 3.800-4.800" fill="none" stroke="#fff" stroke-width="1.700" stroke-linecap="round" stroke-linejoin="round"/></svg>
<span class="t" style="transform:scaleX(0.956);left:660px;transform-origin:0 50%;top:168.30px;font-size:8.5px;color:#2e3436;font-weight:500;">相対移動<span style="font-size:1.06em">(T)</span></span>
<div style="left:642.7px;top:188px;width:10px;height:10px;background:#fff;border:1px solid #cdc7c2;border-radius:2.500px;"></div>
<span class="t" style="transform:scaleX(0.980);left:656.5px;transform-origin:0 50%;top:185.70px;font-size:8.5px;color:#2e3436;font-weight:500;">各オブジェクトに個別に適用<span style="font-size:1.06em">(O)</span></span>
<div style="left:826.2px;top:202.8px;width:66.09999999999991px;height:22.399999999999977px;background:linear-gradient(#f7f6f5,#ecebe9);border:1px solid #d6d1cc;border-radius:3px;box-shadow:0 1px 0 rgba(0,0,0,.04);"></div>
<span class="t" style="transform:scaleX(0.908);left:842.5px;transform-origin:0 50%;top:207.20px;font-size:8.5px;color:#2e3436;font-weight:500;">クリア<span style="font-size:1.06em">(C)</span></span>
<div style="left:897.3px;top:202.8px;width:65.90000000000009px;height:22.399999999999977px;background:linear-gradient(#f7f6f5,#ecebe9);border:1px solid #d6d1cc;border-radius:3px;box-shadow:0 1px 0 rgba(0,0,0,.04);"></div>
<span class="t" style="transform:scaleX(1.024);left:919.5px;transform-origin:0 50%;top:207.20px;font-size:8.79px;color:#2e3436;font-weight:400;">Apply</span>
<div style="left:637px;top:231.5px;width:331.2px;height:354.3px;background:#ffffff;border-top:1px solid #d8d4d0;"></div>
<svg style="left:637.3px;top:238.4px;" width="12.5" height="12.5" viewBox="0 0 16 16"><path d="M1.500 10.500l8.500-1.500 4.500 2.500-8.500 2z" fill="#e8e8e8" stroke="#333" stroke-width=".9" stroke-linejoin="round"/><path d="M1.500 8l8.500-1.500 4.500 2.500-8.500 2z" fill="#f2f2f2" stroke="#333" stroke-width=".9" stroke-linejoin="round"/><path d="M1.500 5.500l8.500-1.500 4.500 2.500-8.500 2z" fill="#ffffff" stroke="#333" stroke-width=".9" stroke-linejoin="round"/><path d="M14.500 6.500v5l-8.500 2v-5" fill="#cfcfcf" stroke="#333" stroke-width=".8"/></svg>
<span class="t" style="transform:scaleX(0.966);left:649px;transform-origin:0 50%;top:237.70px;font-size:8.5px;color:#2e3436;font-weight:500;">レイヤー<span style="font-size:1.06em">(S)</span> <span style="font-size:1.06em">(</span><span class="k">⇧⌘</span><span style="font-size:1.06em">L)</span></span>
<svg style="left:926.8px;top:237.5px;" width="8" height="8" viewBox="0 0 8 8"><rect x=".5" y=".5" width="7" height="7" rx="1" fill="#fafafa" stroke="#8a8a8a" stroke-width=".8"/><path d="M4.500 2.200v3.600l-2.700-1.800z" fill="#555"/></svg>
<svg style="left:952px;top:237.5px;" width="8" height="8" viewBox="0 0 8 8"><rect x=".5" y=".5" width="7" height="7" rx="1" fill="#fafafa" stroke="#8a8a8a" stroke-width=".8"/><path d="M2.300 2.300l3.400 3.400M5.700 2.300l-3.400 3.400" stroke="#555" stroke-width="1"/></svg>
<div style="left:638.7px;top:257.5px;width:328px;height:215px;background:#ffffff;border:1px solid #d5d0cc;"></div>
<svg style="left:644px;top:260.3px;" width="12" height="12" viewBox="0 0 16 16"><path d="M.8 9.200c2.600-5.800 11.800-5.800 14.400 0-2.600 5.200-11.800 5.200-14.400 0z" fill="#fff" stroke="#111" stroke-width="1.300"/><path d="M1.200 10c3 4.300 10.600 4.300 13.600 0" fill="none" stroke="#111" stroke-width="1.700"/><circle cx="8" cy="9" r="2.900" fill="#111"/><circle cx="6.900" cy="7.900" r=".9" fill="#fff"/><path d="M3 5.300l-1.500-2.300M5.600 3.900l-.8-2.800M8.300 3.500l.2-2.900M11 4l1-2.700M13.300 5.500l1.600-2.200" stroke="#111" stroke-width="1.400"/></svg>
<svg style="left:663.5px;top:259.8px;" width="12" height="12" viewBox="0 0 16 16"><defs><linearGradient id="lk" x1="0" y1="0" x2="1" y2="1"><stop offset="0" stop-color="#e8900c"/><stop offset=".6" stop-color="#f6c838"/><stop offset="1" stop-color="#fbe468"/></linearGradient></defs><path d="M4.700 7.200v-2.300a3.300 3.300 0 0 1 6.600 0v2.300" fill="none" stroke="#1a1a1a" stroke-width="2.700"/><path d="M4.700 7.200v-2.300a3.300 3.300 0 0 1 6.600 0v2.300" fill="none" stroke="#dcdcdc" stroke-width=".9"/><rect x="2.300" y="7" width="11.400" height="7.900" rx="1" fill="url(#lk)" stroke="#3a2606" stroke-width="1.200"/><rect x="7.250" y="8.700" width="1.500" height="4" fill="#2a1a04"/></svg>
<span class="t" style="transform:scaleX(0.974);left:695.2px;transform-origin:0 50%;top:259.60px;font-size:8.32px;color:#2e3436;font-weight:500;">下絵</span>
<svg style="left:644px;top:278.53000000000003px;" width="12" height="12" viewBox="0 0 16 16"><path d="M1.300 8c.2-5.500 13.200-5.500 13.400 0-3.200 2.300-10.200 2.300-13.400 0z" fill="#fff" stroke="#111" stroke-width="1.300"/><path d="M1.300 8.300c3.200 2.500 10.200 2.500 13.400 0" fill="none" stroke="#111" stroke-width="1.700"/><path d="M2.300 9.200l-1.800 2.800M5 10.200l-1 3.300M8 10.500v3.700M11 10.200l1 3.300M13.700 9.200l1.800 2.800" stroke="#111" stroke-width="1.400"/></svg>
<svg style="left:663.5px;top:278.03000000000003px;" width="12" height="12" viewBox="0 0 16 16"><defs><linearGradient id="lk" x1="0" y1="0" x2="1" y2="1"><stop offset="0" stop-color="#e8900c"/><stop offset=".6" stop-color="#f6c838"/><stop offset="1" stop-color="#fbe468"/></linearGradient></defs><path d="M4.700 7.200v-2.300a3.300 3.300 0 0 1 6.600 0v2.300" fill="none" stroke="#1a1a1a" stroke-width="2.700"/><path d="M4.700 7.200v-2.300a3.300 3.300 0 0 1 6.600 0v2.300" fill="none" stroke="#dcdcdc" stroke-width=".9"/><rect x="2.300" y="7" width="11.400" height="7.900" rx="1" fill="url(#lk)" stroke="#3a2606" stroke-width="1.200"/><rect x="7.250" y="8.700" width="1.500" height="4" fill="#2a1a04"/></svg>
<span class="t" style="transform:scaleX(0.974);left:695.2px;transform-origin:0 50%;top:277.83px;font-size:8.32px;color:#2e3436;font-weight:500;">街灯</span>
<div style="left:639.7px;top:294px;width:326px;height:17.6px;background:#3180e0;"></div>
<svg style="left:644px;top:296.76px;" width="12" height="12" viewBox="0 0 16 16"><path d="M.8 9.200c2.600-5.800 11.800-5.800 14.400 0-2.600 5.200-11.800 5.200-14.400 0z" fill="#fff" stroke="#111" stroke-width="1.300"/><path d="M1.200 10c3 4.300 10.600 4.300 13.600 0" fill="none" stroke="#111" stroke-width="1.700"/><circle cx="8" cy="9" r="2.900" fill="#111"/><circle cx="6.900" cy="7.900" r=".9" fill="#fff"/><path d="M3 5.300l-1.500-2.300M5.600 3.900l-.8-2.800M8.300 3.500l.2-2.900M11 4l1-2.700M13.300 5.500l1.600-2.200" stroke="#111" stroke-width="1.400"/></svg>
<svg style="left:663.5px;top:296.26px;" width="12" height="12" viewBox="0 0 16 16"><defs><linearGradient id="lko" x1="0" y1="0" x2="1" y2="1"><stop offset="0" stop-color="#f4e6a0"/><stop offset="1" stop-color="#eccf50"/></linearGradient></defs><g transform="rotate(-18 4.700 8)"><path d="M4.700 8v-3.300a3.300 3.300 0 0 1 6.600 0v1.300" fill="none" stroke="#16181c" stroke-width="2.500"/><path d="M4.700 8v-3.300a3.300 3.300 0 0 1 6.600 0v1.300" fill="none" stroke="#7a8494" stroke-width=".7"/></g><rect x="3.300" y="7.800" width="10.400" height="7.400" rx="1" fill="url(#lko)" stroke="#4a3a10" stroke-width="1.100"/><rect x="7.800" y="9.600" width="1.400" height="3.500" fill="#5a4a18"/></svg>
<span class="t" style="transform:scaleX(0.986);left:695.2px;transform-origin:0 50%;top:296.06px;font-size:8.32px;color:#ffffff;font-weight:500;">芝生暗</span>
<svg style="left:644px;top:314.99px;" width="12" height="12" viewBox="0 0 16 16"><path d="M1.300 8c.2-5.500 13.200-5.500 13.400 0-3.200 2.300-10.200 2.300-13.400 0z" fill="#fff" stroke="#111" stroke-width="1.300"/><path d="M1.300 8.300c3.200 2.500 10.200 2.500 13.400 0" fill="none" stroke="#111" stroke-width="1.700"/><path d="M2.300 9.200l-1.800 2.800M5 10.200l-1 3.300M8 10.500v3.700M11 10.200l1 3.300M13.700 9.200l1.800 2.800" stroke="#111" stroke-width="1.400"/></svg>
<svg style="left:663.5px;top:314.49px;" width="12" height="12" viewBox="0 0 16 16"><defs><linearGradient id="lk" x1="0" y1="0" x2="1" y2="1"><stop offset="0" stop-color="#e8900c"/><stop offset=".6" stop-color="#f6c838"/><stop offset="1" stop-color="#fbe468"/></linearGradient></defs><path d="M4.700 7.200v-2.300a3.300 3.300 0 0 1 6.600 0v2.300" fill="none" stroke="#1a1a1a" stroke-width="2.700"/><path d="M4.700 7.200v-2.300a3.300 3.300 0 0 1 6.600 0v2.300" fill="none" stroke="#dcdcdc" stroke-width=".9"/><rect x="2.300" y="7" width="11.400" height="7.900" rx="1" fill="url(#lk)" stroke="#3a2606" stroke-width="1.200"/><rect x="7.250" y="8.700" width="1.500" height="4" fill="#2a1a04"/></svg>
<span class="t" style="transform:scaleX(0.986);left:695.2px;transform-origin:0 50%;top:314.29px;font-size:8.32px;color:#2e3436;font-weight:500;">地面暗</span>
<svg style="left:644px;top:333.22px;" width="12" height="12" viewBox="0 0 16 16"><path d="M1.300 8c.2-5.500 13.200-5.500 13.400 0-3.200 2.300-10.200 2.300-13.400 0z" fill="#fff" stroke="#111" stroke-width="1.300"/><path d="M1.300 8.300c3.200 2.500 10.200 2.500 13.400 0" fill="none" stroke="#111" stroke-width="1.700"/><path d="M2.300 9.200l-1.800 2.800M5 10.200l-1 3.300M8 10.500v3.700M11 10.200l1 3.300M13.700 9.200l1.800 2.800" stroke="#111" stroke-width="1.400"/></svg>
<svg style="left:663.5px;top:332.72px;" width="12" height="12" viewBox="0 0 16 16"><defs><linearGradient id="lk" x1="0" y1="0" x2="1" y2="1"><stop offset="0" stop-color="#e8900c"/><stop offset=".6" stop-color="#f6c838"/><stop offset="1" stop-color="#fbe468"/></linearGradient></defs><path d="M4.700 7.200v-2.300a3.300 3.300 0 0 1 6.600 0v2.300" fill="none" stroke="#1a1a1a" stroke-width="2.700"/><path d="M4.700 7.200v-2.300a3.300 3.300 0 0 1 6.600 0v2.300" fill="none" stroke="#dcdcdc" stroke-width=".9"/><rect x="2.300" y="7" width="11.400" height="7.900" rx="1" fill="url(#lk)" stroke="#3a2606" stroke-width="1.200"/><rect x="7.250" y="8.700" width="1.500" height="4" fill="#2a1a04"/></svg>
<span class="t" style="transform:scaleX(0.986);left:695.2px;transform-origin:0 50%;top:332.52px;font-size:8.32px;color:#2e3436;font-weight:500;">木</span>
<svg style="left:644px;top:351.45000000000005px;" width="12" height="12" viewBox="0 0 16 16"><path d="M1.300 8c.2-5.500 13.200-5.500 13.400 0-3.200 2.300-10.200 2.300-13.400 0z" fill="#fff" stroke="#111" stroke-width="1.300"/><path d="M1.300 8.300c3.200 2.500 10.200 2.500 13.400 0" fill="none" stroke="#111" stroke-width="1.700"/><path d="M2.300 9.200l-1.800 2.800M5 10.200l-1 3.300M8 10.500v3.700M11 10.200l1 3.300M13.700 9.200l1.800 2.800" stroke="#111" stroke-width="1.400"/></svg>
<svg style="left:663.5px;top:350.95000000000005px;" width="12" height="12" viewBox="0 0 16 16"><defs><linearGradient id="lk" x1="0" y1="0" x2="1" y2="1"><stop offset="0" stop-color="#e8900c"/><stop offset=".6" stop-color="#f6c838"/><stop offset="1" stop-color="#fbe468"/></linearGradient></defs><path d="M4.700 7.200v-2.300a3.300 3.300 0 0 1 6.600 0v2.300" fill="none" stroke="#1a1a1a" stroke-width="2.700"/><path d="M4.700 7.200v-2.300a3.300 3.300 0 0 1 6.600 0v2.300" fill="none" stroke="#dcdcdc" stroke-width=".9"/><rect x="2.300" y="7" width="11.400" height="7.900" rx="1" fill="url(#lk)" stroke="#3a2606" stroke-width="1.200"/><rect x="7.250" y="8.700" width="1.500" height="4" fill="#2a1a04"/></svg>
<span class="t" style="transform:scaleX(0.974);left:695.2px;transform-origin:0 50%;top:350.75px;font-size:8.32px;color:#2e3436;font-weight:500;">調整</span>
<svg style="left:644px;top:369.68px;" width="12" height="12" viewBox="0 0 16 16"><path d="M1.300 8c.2-5.500 13.200-5.500 13.400 0-3.200 2.300-10.200 2.300-13.400 0z" fill="#fff" stroke="#111" stroke-width="1.300"/><path d="M1.300 8.300c3.200 2.500 10.200 2.500 13.400 0" fill="none" stroke="#111" stroke-width="1.700"/><path d="M2.300 9.200l-1.800 2.800M5 10.200l-1 3.300M8 10.500v3.700M11 10.200l1 3.300M13.700 9.200l1.800 2.800" stroke="#111" stroke-width="1.400"/></svg>
<svg style="left:663.5px;top:369.18px;" width="12" height="12" viewBox="0 0 16 16"><defs><linearGradient id="lk" x1="0" y1="0" x2="1" y2="1"><stop offset="0" stop-color="#e8900c"/><stop offset=".6" stop-color="#f6c838"/><stop offset="1" stop-color="#fbe468"/></linearGradient></defs><path d="M4.700 7.200v-2.300a3.300 3.300 0 0 1 6.600 0v2.300" fill="none" stroke="#1a1a1a" stroke-width="2.700"/><path d="M4.700 7.200v-2.300a3.300 3.300 0 0 1 6.600 0v2.300" fill="none" stroke="#dcdcdc" stroke-width=".9"/><rect x="2.300" y="7" width="11.400" height="7.900" rx="1" fill="url(#lk)" stroke="#3a2606" stroke-width="1.200"/><rect x="7.250" y="8.700" width="1.500" height="4" fill="#2a1a04"/></svg>
<span class="t" style="transform:scaleX(0.974);left:695.2px;transform-origin:0 50%;top:368.98px;font-size:8.32px;color:#2e3436;font-weight:500;">人物</span>
<svg style="left:644px;top:387.91px;" width="12" height="12" viewBox="0 0 16 16"><path d="M.8 9.200c2.600-5.800 11.800-5.800 14.400 0-2.600 5.200-11.800 5.200-14.400 0z" fill="#fff" stroke="#111" stroke-width="1.300"/><path d="M1.200 10c3 4.300 10.600 4.300 13.600 0" fill="none" stroke="#111" stroke-width="1.700"/><circle cx="8" cy="9" r="2.900" fill="#111"/><circle cx="6.900" cy="7.900" r=".9" fill="#fff"/><path d="M3 5.300l-1.500-2.300M5.600 3.900l-.8-2.800M8.300 3.500l.2-2.900M11 4l1-2.700M13.300 5.500l1.600-2.200" stroke="#111" stroke-width="1.400"/></svg>
<svg style="left:663.5px;top:387.41px;" width="12" height="12" viewBox="0 0 16 16"><defs><linearGradient id="lk" x1="0" y1="0" x2="1" y2="1"><stop offset="0" stop-color="#e8900c"/><stop offset=".6" stop-color="#f6c838"/><stop offset="1" stop-color="#fbe468"/></linearGradient></defs><path d="M4.700 7.200v-2.300a3.300 3.300 0 0 1 6.600 0v2.300" fill="none" stroke="#1a1a1a" stroke-width="2.700"/><path d="M4.700 7.200v-2.300a3.300 3.300 0 0 1 6.600 0v2.300" fill="none" stroke="#dcdcdc" stroke-width=".9"/><rect x="2.300" y="7" width="11.400" height="7.900" rx="1" fill="url(#lk)" stroke="#3a2606" stroke-width="1.200"/><rect x="7.250" y="8.700" width="1.500" height="4" fill="#2a1a04"/></svg>
<span class="t" style="transform:scaleX(0.974);left:695.2px;transform-origin:0 50%;top:387.21px;font-size:8.32px;color:#2e3436;font-weight:500;">芝生</span>
<svg style="left:644px;top:406.14px;" width="12" height="12" viewBox="0 0 16 16"><path d="M1.300 8c.2-5.500 13.200-5.500 13.400 0-3.200 2.300-10.200 2.300-13.400 0z" fill="#fff" stroke="#111" stroke-width="1.300"/><path d="M1.300 8.300c3.200 2.500 10.200 2.500 13.400 0" fill="none" stroke="#111" stroke-width="1.700"/><path d="M2.300 9.200l-1.800 2.800M5 10.200l-1 3.300M8 10.500v3.700M11 10.200l1 3.300M13.700 9.200l1.800 2.800" stroke="#111" stroke-width="1.400"/></svg>
<svg style="left:663.5px;top:405.64px;" width="12" height="12" viewBox="0 0 16 16"><defs><linearGradient id="lk" x1="0" y1="0" x2="1" y2="1"><stop offset="0" stop-color="#e8900c"/><stop offset=".6" stop-color="#f6c838"/><stop offset="1" stop-color="#fbe468"/></linearGradient></defs><path d="M4.700 7.200v-2.300a3.300 3.300 0 0 1 6.600 0v2.300" fill="none" stroke="#1a1a1a" stroke-width="2.700"/><path d="M4.700 7.200v-2.300a3.300 3.300 0 0 1 6.600 0v2.300" fill="none" stroke="#dcdcdc" stroke-width=".9"/><rect x="2.300" y="7" width="11.400" height="7.900" rx="1" fill="url(#lk)" stroke="#3a2606" stroke-width="1.200"/><rect x="7.250" y="8.700" width="1.500" height="4" fill="#2a1a04"/></svg>
<span class="t" style="transform:scaleX(0.986);left:695.2px;transform-origin:0 50%;top:405.44px;font-size:8.32px;color:#2e3436;font-weight:500;">緑上暗</span>
<svg style="left:644px;top:424.37px;" width="12" height="12" viewBox="0 0 16 16"><path d="M1.300 8c.2-5.500 13.200-5.500 13.400 0-3.200 2.300-10.200 2.300-13.400 0z" fill="#fff" stroke="#111" stroke-width="1.300"/><path d="M1.300 8.300c3.200 2.500 10.200 2.500 13.400 0" fill="none" stroke="#111" stroke-width="1.700"/><path d="M2.300 9.200l-1.800 2.800M5 10.200l-1 3.300M8 10.500v3.700M11 10.200l1 3.300M13.700 9.200l1.800 2.800" stroke="#111" stroke-width="1.400"/></svg>
<svg style="left:663.5px;top:423.87px;" width="12" height="12" viewBox="0 0 16 16"><defs><linearGradient id="lk" x1="0" y1="0" x2="1" y2="1"><stop offset="0" stop-color="#e8900c"/><stop offset=".6" stop-color="#f6c838"/><stop offset="1" stop-color="#fbe468"/></linearGradient></defs><path d="M4.700 7.200v-2.300a3.300 3.300 0 0 1 6.600 0v2.300" fill="none" stroke="#1a1a1a" stroke-width="2.700"/><path d="M4.700 7.200v-2.300a3.300 3.300 0 0 1 6.600 0v2.300" fill="none" stroke="#dcdcdc" stroke-width=".9"/><rect x="2.300" y="7" width="11.400" height="7.900" rx="1" fill="url(#lk)" stroke="#3a2606" stroke-width="1.200"/><rect x="7.250" y="8.700" width="1.500" height="4" fill="#2a1a04"/></svg>
<span class="t" style="transform:scaleX(0.986);left:695.2px;transform-origin:0 50%;top:423.67px;font-size:8.32px;color:#2e3436;font-weight:500;">空調整</span>
<svg style="left:644px;top:442.6px;" width="12" height="12" viewBox="0 0 16 16"><path d="M1.300 8c.2-5.500 13.200-5.500 13.400 0-3.200 2.300-10.200 2.300-13.400 0z" fill="#fff" stroke="#111" stroke-width="1.300"/><path d="M1.300 8.300c3.200 2.500 10.200 2.500 13.400 0" fill="none" stroke="#111" stroke-width="1.700"/><path d="M2.300 9.200l-1.800 2.800M5 10.200l-1 3.300M8 10.500v3.700M11 10.200l1 3.300M13.700 9.200l1.800 2.800" stroke="#111" stroke-width="1.400"/></svg>
<svg style="left:663.5px;top:442.1px;" width="12" height="12" viewBox="0 0 16 16"><defs><linearGradient id="lk" x1="0" y1="0" x2="1" y2="1"><stop offset="0" stop-color="#e8900c"/><stop offset=".6" stop-color="#f6c838"/><stop offset="1" stop-color="#fbe468"/></linearGradient></defs><path d="M4.700 7.200v-2.300a3.300 3.300 0 0 1 6.600 0v2.300" fill="none" stroke="#1a1a1a" stroke-width="2.700"/><path d="M4.700 7.200v-2.300a3.300 3.300 0 0 1 6.600 0v2.300" fill="none" stroke="#dcdcdc" stroke-width=".9"/><rect x="2.300" y="7" width="11.400" height="7.900" rx="1" fill="url(#lk)" stroke="#3a2606" stroke-width="1.200"/><rect x="7.250" y="8.700" width="1.500" height="4" fill="#2a1a04"/></svg>
<span class="t" style="transform:scaleX(0.974);left:695.2px;transform-origin:0 50%;top:441.90px;font-size:8.32px;color:#2e3436;font-weight:500;">緑暗</span>
<svg style="left:644px;top:460.83000000000004px;" width="12" height="12" viewBox="0 0 16 16"><path d="M1.300 8c.2-5.500 13.200-5.500 13.400 0-3.200 2.300-10.200 2.300-13.400 0z" fill="#fff" stroke="#111" stroke-width="1.300"/><path d="M1.300 8.300c3.200 2.500 10.200 2.500 13.400 0" fill="none" stroke="#111" stroke-width="1.700"/><path d="M2.300 9.200l-1.800 2.800M5 10.200l-1 3.300M8 10.500v3.700M11 10.200l1 3.300M13.700 9.200l1.800 2.800" stroke="#111" stroke-width="1.400"/></svg>
<svg style="left:663.5px;top:460.33000000000004px;" width="12" height="12" viewBox="0 0 16 16"><defs><linearGradient id="lk" x1="0" y1="0" x2="1" y2="1"><stop offset="0" stop-color="#e8900c"/><stop offset=".6" stop-color="#f6c838"/><stop offset="1" stop-color="#fbe468"/></linearGradient></defs><path d="M4.700 7.200v-2.300a3.300 3.300 0 0 1 6.600 0v2.300" fill="none" stroke="#1a1a1a" stroke-width="2.700"/><path d="M4.700 7.200v-2.300a3.300 3.300 0 0 1 6.600 0v2.300" fill="none" stroke="#dcdcdc" stroke-width=".9"/><rect x="2.300" y="7" width="11.400" height="7.900" rx="1" fill="url(#lk)" stroke="#3a2606" stroke-width="1.200"/><rect x="7.250" y="8.700" width="1.500" height="4" fill="#2a1a04"/></svg>
<span class="t" style="transform:scaleX(0.992);left:695.2px;transform-origin:0 50%;top:460.13px;font-size:8.32px;color:#2e3436;font-weight:500;">緑遠景暗</span>
<div style="left:637px;top:472.5px;width:331.2px;height:10px;background:#ffffff;"></div>
<div style="left:638.7px;top:472px;width:328px;height:1px;background:#d5d0cc;"></div>
<svg style="left:647.5px;top:480.5px;" width="9.5" height="9.5" viewBox="0 0 9.5 9.5"><path d="M4.750 .8v7.900M.8 4.750h7.900" stroke="#2f6fc4" stroke-width="2.300" stroke-linecap="round"/></svg>
<svg style="left:672.5px;top:483.5px;" width="9" height="3" viewBox="0 0 9 3"><path d="M1 1.500h7" stroke="#2f6fc4" stroke-width="2.300" stroke-linecap="round"/></svg>
<svg style="left:871.4px;top:478.7px;" width="12.4" height="12.4" viewBox="0 0 11 11"><path d="M1 1h9" stroke="#888886" stroke-width="1.25"/><path d="M1.500 8l4-4.500 4 4.500M3.500 9.500l2-2.200 2 2.200" fill="none" stroke="#888886" stroke-width="1.25"/></svg>
<svg style="left:895.8px;top:478.7px;" width="12.4" height="12.4" viewBox="0 0 11 11"><path d="M1.500 6l4-4.500 4 4.500h-2.500M1.500 6h2.500M5.500 4.500v5" fill="none" stroke="#888886" stroke-width="1.25"/></svg>
<svg style="left:920.0px;top:478.7px;" width="12.4" height="12.4" viewBox="0 0 11 11"><path d="M1.500 5l4 4.500 4-4.500h-2.500M1.500 5h2.500M5.500 6.500v-5" fill="none" stroke="#888886" stroke-width="1.25"/></svg>
<svg style="left:944.4px;top:478.7px;" width="12.4" height="12.4" viewBox="0 0 11 11"><path d="M1 10h9" stroke="#888886" stroke-width="1.25"/><path d="M1.500 3l4 4.500 4-4.500M3.500 1.500l2 2.200 2-2.200" fill="none" stroke="#888886" stroke-width="1.25"/></svg>
<span class="t" style="transform:scaleX(1.002);left:804px;transform-origin:0 50%;top:506.00px;font-size:8.5px;color:#2e3436;font-weight:500;">ブレンドモード:</span>
<div style="left:871.9px;top:500.7px;width:87.39999999999998px;height:24.30000000000001px;background:linear-gradient(#f7f6f5,#ecebe9);border:1px solid #d6d1cc;border-radius:3px;box-shadow:0 1px 0 rgba(0,0,0,.04);"></div>
<span class="t" style="transform:scaleX(0.999);left:880px;transform-origin:0 50%;top:506.00px;font-size:8.5px;color:#2e3436;font-weight:500;">標準</span>
<svg style="left:942px;top:511.2px;" width="7" height="4" viewBox="0 0 7 4"><path d="M0 0h7l-3.500 4z" fill="#2e3436"/></svg>
<div style="left:637px;top:530.3px;width:331.2px;height:55.5px;background:#ffffff;border-top:1px solid #dedad6;"></div>
<div style="left:639.8px;top:536.4px;width:279.2px;height:22.1px;background:#dfdcd9;"></div>
<div style="left:639.8px;top:536.4px;width:43.6px;height:22.1px;background:#3180e0;"></div>
<span class="t" style="transform:scaleX(0.970);left:643px;transform-origin:0 50%;top:540.60px;font-size:8.32px;color:#ffffff;font-weight:500;">ぼかし (%)</span>
<span class="t" style="transform:scaleX(0.997);left:921.3px;transform-origin:0 50%;top:540.80px;font-size:8.5px;color:#2e3436;font-weight:400;">15.5</span>
<div style="left:639.8px;top:559.2px;width:279.2px;height:22.1px;background:#3180e0;"></div>
<span class="t" style="transform:scaleX(0.979);left:643px;transform-origin:0 50%;top:563.40px;font-size:8.32px;color:#ffffff;font-weight:500;">不透明度 (%)</span>
<span class="t" style="transform:scaleX(1.034);left:921.3px;transform-origin:0 50%;top:563.60px;font-size:8.5px;color:#2e3436;font-weight:400;">100.0</span>
<div style="left:942.5px;top:536.4px;width:1px;height:22px;background:#efedea;"></div>
<div style="left:945.8px;top:547.0px;width:6.5px;height:1.3px;background:#2e3436;"></div>
<div style="left:957.3px;top:547.0px;width:7px;height:1.3px;background:#2e3436;"></div>
<div style="left:960.15px;top:544.1px;width:1.3px;height:7px;background:#2e3436;"></div>
<div style="left:945.8px;top:569.8px;width:6.5px;height:1.3px;background:#2e3436;"></div>
<div style="left:957.3px;top:569.8px;width:7px;height:1.3px;background:#d3d1cf;"></div>
<div style="left:960.15px;top:566.9px;width:1.3px;height:7px;background:#d3d1cf;"></div>
<div style="left:637px;top:586px;width:331.4px;height:22.8px;background:linear-gradient(#f8f7f6,#efedeb);border:1px solid #d0cbc6;border-radius:2px;"></div>
<svg style="left:643px;top:591.5px;" width="11.5" height="11.5" viewBox="0 0 16 16"><path d="M2.500 1.500h5l3 3v10h-8z" fill="#fdfdfd" stroke="#333" stroke-width="1.100"/><path d="M7.500 1.500v3h3" fill="none" stroke="#333" stroke-width=".9"/><path d="M6.500 8.500h7" stroke="#222" stroke-width="1.300"/><path d="M12 6l3 2.500-3 2.500z" fill="#222"/></svg>
<span class="t" style="transform:scaleX(0.901);left:656.5px;transform-origin:0 50%;top:590.50px;font-size:8.5px;color:#2e3436;font-weight:500;"><span style="font-size:1.06em">PNG</span> 画像にエクスポート<span style="font-size:1.06em">(E)</span> <span style="font-size:1.06em">(</span><span class="k">⇧⌘</span><span style="font-size:1.06em">E)</span></span>
<svg style="left:952.5px;top:594.7px;" width="7.5" height="5" viewBox="0 0 7.5 5"><path d="M.8 4.200l2.950-3 2.950 3" fill="none" stroke="#2e3436" stroke-width="1.400"/></svg>
<div style="left:637px;top:609.9px;width:331.4px;height:22.8px;background:linear-gradient(#f8f7f6,#efedeb);border:1px solid #d0cbc6;border-radius:2px;"></div>
<svg style="left:643px;top:615.4px;" width="11.5" height="11.5" viewBox="0 0 16 16"><defs><linearGradient id="gf1" x1="0" y1="0" x2="1" y2="1"><stop offset=".45" stop-color="#fff"/><stop offset=".6" stop-color="#888"/><stop offset=".8" stop-color="#111"/></linearGradient></defs><path d="M1.500 1.500h12.500v12.500h-12.500z" fill="url(#gf1)" stroke="#111" stroke-width="1.600"/><path d="M3 14l9.500-9 2 2-9 8.500z" fill="#1a1a1a"/><path d="M12 5l2.500-3 1.500 2-2 3z" fill="#f0c020"/></svg>
<span class="t" style="transform:scaleX(0.936);left:656.5px;transform-origin:0 50%;top:614.40px;font-size:8.5px;color:#2e3436;font-weight:500;">フィル<span style="font-size:1.06em">/</span>ストローク<span style="font-size:1.06em">(F)</span> <span style="font-size:1.06em">(</span><span class="k">⇧⌘</span><span style="font-size:1.06em">F)</span></span>
<svg style="left:952.5px;top:618.6px;" width="7.5" height="5" viewBox="0 0 7.5 5"><path d="M.8 4.200l2.950-3 2.950 3" fill="none" stroke="#2e3436" stroke-width="1.400"/></svg>
<div style="left:637px;top:633.4px;width:331.4px;height:22.8px;background:#d9d5d1;border:1px solid #d0cbc6;border-radius:2px;"></div>
<svg style="left:643px;top:638.9px;" width="11.5" height="11.5" viewBox="0 0 16 16"><path d="M1.500 10.500l8.500-1.500 4.500 2.500-8.500 2z" fill="#e8e8e8" stroke="#333" stroke-width=".9" stroke-linejoin="round"/><path d="M1.500 8l8.500-1.500 4.500 2.500-8.500 2z" fill="#f2f2f2" stroke="#333" stroke-width=".9" stroke-linejoin="round"/><path d="M1.500 5.500l8.500-1.500 4.500 2.500-8.500 2z" fill="#ffffff" stroke="#333" stroke-width=".9" stroke-linejoin="round"/><path d="M14.500 6.500v5l-8.500 2v-5" fill="#cfcfcf" stroke="#333" stroke-width=".8"/></svg>
<span class="t" style="transform:scaleX(0.966);left:656.5px;transform-origin:0 50%;top:637.90px;font-size:8.5px;color:#2e3436;font-weight:500;">レイヤー<span style="font-size:1.06em">(S)</span> <span style="font-size:1.06em">(</span><span class="k">⇧⌘</span><span style="font-size:1.06em">L)</span></span>
<svg style="left:952.5px;top:642.1px;" width="7.5" height="5" viewBox="0 0 7.5 5"><path d="M.8 4.200l2.950-3 2.950 3" fill="none" stroke="#2e3436" stroke-width="1.400"/></svg>
<div style="left:637px;top:657.4px;width:331.4px;height:22.8px;background:linear-gradient(#f8f7f6,#efedeb);border:1px solid #d0cbc6;border-radius:2px;"></div>
<svg style="left:643px;top:662.9px;" width="11.5" height="11.5" viewBox="0 0 16 16"><rect x="1.500" y="6" width="8" height="8" fill="#e8c23a" stroke="#6b5310" stroke-width="1"/><path d="M9 2l1 2 2 .3-1.500 1.500.4 2.200-1.900-1-1.900 1 .4-2.200L6 4.300 8 4z" fill="#fff" stroke="#444" stroke-width=".7"/><path d="M11 9l4 1.500M12 12.500h3" stroke="#444" stroke-width=".9"/></svg>
<span class="t" style="transform:scaleX(0.936);left:656.5px;transform-origin:0 50%;top:661.90px;font-size:8.5px;color:#2e3436;font-weight:500;">オブジェクトのプロパティ<span style="font-size:1.06em">(O)</span> <span style="font-size:1.06em">(</span><span class="k">⇧⌘</span><span style="font-size:1.06em">O)</span></span>
<svg style="left:952.5px;top:666.1px;" width="7.5" height="5" viewBox="0 0 7.5 5"><path d="M.8 4.200l2.950-3 2.950 3" fill="none" stroke="#2e3436" stroke-width="1.400"/></svg>
<div style="left:969px;top:90.2px;width:31px;height:592px;background:#f5f3f1;"></div>
<svg style="left:978.9px;top:98.4px;" width="12" height="12" viewBox="0 0 12 12"><path d="M2 2l8 8" stroke="#223" stroke-width="1.300"/><rect x=".5" y=".5" width="3.400" height="3.400" fill="#3a3aee" transform="rotate(45 2.200 2.200)"/><circle cx="10" cy="10" r="2" fill="#3aa05a"/></svg>
<div style="left:972px;top:122px;width:26px;height:1px;background:#e4e0dc;"></div>
<div style="left:972.8px;top:127.3px;width:24.8px;height:23.4px;background:#dedbd7;border:1px solid #d0cbc6;border-radius:3px;"></div>
<svg style="left:978.9px;top:133px;" width="12" height="12" viewBox="0 0 12 12"><path d="M2 2l8 8" stroke="#c8ccd6" stroke-width="1.200"/><rect x=".8" y=".8" width="3" height="3" fill="#c9cfe6" transform="rotate(45 2.300 2.300)"/><circle cx="10" cy="10" r="1.800" fill="#bfdcc8"/></svg>
<svg style="left:978.9px;top:158px;" width="12" height="12" viewBox="0 0 12 12"><path d="M1.500 10.500h8v-8" fill="none" stroke="#dcdad7" stroke-width="1"/></svg>
<svg style="left:978.9px;top:182px;" width="12" height="12" viewBox="0 0 12 12"><path d="M1.500 10.500h8v-8" fill="none" stroke="#dcdad7" stroke-width="1"/><path d="M9.500 .5v10M7.500 8.500l2 2" stroke="#cfd8d0" stroke-width="1" fill="none"/></svg>
<svg style="left:978.9px;top:206px;" width="12" height="12" viewBox="0 0 12 12"><path d="M1.500 10.500h8v-8" fill="none" stroke="#dcdad7" stroke-width="1"/><path d="M9.500 1v4M8 2.500l1.500-1.500 1.500 1.500" stroke="#bcd8c4" stroke-width="1" fill="none"/></svg>
<svg style="left:978.9px;top:229.4px;" width="12" height="12" viewBox="0 0 12 12"><path d="M1.500 10.500h8v-8" fill="none" stroke="#dcdad7" stroke-width="1"/><rect x="4" y="4" width="2.500" height="2.500" fill="#cfe3d4"/></svg>
<div style="left:972px;top:254px;width:26px;height:1px;background:#e4e0dc;"></div>
<div style="left:972.8px;top:259.8px;width:24.8px;height:23.4px;background:#dedbd7;border:1px solid #d0cbc6;border-radius:3px;"></div>
<svg style="left:978.9px;top:265.5px;" width="12" height="12" viewBox="0 0 12 12"><path d="M2 2l8 8" stroke="#c8ccd6" stroke-width="1.200"/><rect x=".8" y=".8" width="3" height="3" fill="#c9cfe6" transform="rotate(45 2.300 2.300)"/><circle cx="10" cy="10" r="1.800" fill="#bfdcc8"/></svg>
<svg style="left:978.9px;top:290px;" width="12" height="12" viewBox="0 0 12 12"><path d="M1.500 2q6 0 7 7" fill="none" stroke="#d0d4d0" stroke-width="1.100"/><path d="M6.500 7.500l2.300 2.500 1.500-3z" fill="#c4d6c8"/></svg>
<svg style="left:978.9px;top:314.7px;" width="12" height="12" viewBox="0 0 12 12"><path d="M2 10l8-8" stroke="#d2d6d2" stroke-width="1.100"/><circle cx="6" cy="6" r="1.500" fill="#c4d6c8"/></svg>
<div style="left:972.8px;top:333.8px;width:24.8px;height:23.4px;background:#dedbd7;border:1px solid #d0cbc6;border-radius:3px;"></div>
<svg style="left:978.9px;top:339.5px;" width="12" height="12" viewBox="0 0 12 12"><path d="M1.500 2q6 0 7 7" fill="none" stroke="#d0d4d0" stroke-width="1.100"/><path d="M6.500 7.500l2.300 2.500 1.500-3z" fill="#b8d0be"/></svg>
<svg style="left:978.9px;top:363.5px;" width="12" height="12" viewBox="0 0 12 12"><path d="M1.500 2q6 0 7 7" fill="none" stroke="#d0d4d0" stroke-width="1.100"/><path d="M6.500 7.500l2.300 2.500 1.500-3z" fill="#c4d6c8"/></svg>
<svg style="left:978.9px;top:389.5px;" width="12" height="12" viewBox="0 0 12 12"><path d="M2 10l8-8" stroke="#f0b8c0" stroke-width="1.200"/><circle cx="6" cy="6" r="1.400" fill="#e89aa6"/></svg>
<div style="left:972px;top:411.8px;width:26px;height:1px;background:#e4e0dc;"></div>
<div style="left:972.8px;top:418.3px;width:24.8px;height:23.4px;background:#dedbd7;border:1px solid #d0cbc6;border-radius:3px;"></div>
<svg style="left:978.9px;top:424px;" width="12" height="12" viewBox="0 0 12 12"><path d="M2 2l8 8" stroke="#8f98d8" stroke-width="1.400"/><rect x=".8" y=".8" width="3" height="3" fill="#7f88d8" transform="rotate(45 2.300 2.300)"/><circle cx="10" cy="10" r="1.800" fill="#8fc7a0"/></svg>
<svg style="left:978.9px;top:447.5px;" width="12" height="12" viewBox="0 0 12 12"><path d="M2 10.500h8v-8" fill="none" stroke="#dcdad7" stroke-width="1"/><circle cx="6" cy="6" r="1.300" fill="#c9cfe6"/></svg>
<svg style="left:978.9px;top:471.7px;" width="12" height="12" viewBox="0 0 12 12"><path d="M2 10.500h8v-8" fill="none" stroke="#dcdad7" stroke-width="1"/><circle cx="6" cy="6" r="1.300" fill="#c9cfe6"/><path d="M10 6h-3" stroke="#d5d5d5" stroke-width=".9"/></svg>
<span class="t" style="left:979.5px;transform-origin:0 50%;top:495.00px;font-size:12px;color:#b9b9b7;font-weight:700;">A</span>
<div style="left:972px;top:520.8px;width:26px;height:1px;background:#e4e0dc;"></div>
<svg style="left:979.4px;top:532px;" width="11" height="12" viewBox="0 0 11 12"><path d="M1.500 1.500h6l2 2v7h-8z" fill="#fbfbfb" stroke="#d4d2cf" stroke-width="1"/></svg>
<div style="left:972.8px;top:550.3px;width:24.8px;height:23.4px;background:#dedbd7;border:1px solid #d0cbc6;border-radius:3px;"></div>
<svg style="left:978.9px;top:556px;" width="12" height="12" viewBox="0 0 12 12"><path d="M1 1h10v10h-10zM1 4.300h10M1 7.700h10M4.300 1v10M7.700 1v10" fill="none" stroke="#8f9be0" stroke-width=".9"/></svg>
<div style="left:972.8px;top:575.3px;width:24.8px;height:23.4px;background:#dedbd7;border:1px solid #d0cbc6;border-radius:3px;"></div>
<svg style="left:978.9px;top:581px;" width="12" height="12" viewBox="0 0 12 12"><path d="M2.500 1v10" stroke="#9fb0e0" stroke-width="1.200"/><path d="M5.500 11l4-10" stroke="#a8b4d8" stroke-width="1.200"/></svg>
<div style="left:0px;top:682.3px;width:1000px;height:22px;background:#cbcbcb;"></div>
<div style="left:975.3px;top:682.3px;width:24.7px;height:22px;background:#f5f3f1;"></div>
<div style="left:0px;top:682.3px;width:13.333px;height:14.7px;background:#f5f3f1;"></div>
<svg style="left:0px;top:682.3px;" width="13.3" height="14.7" viewBox="0 0 13.3 14.7"><path d="M0 0l13.300 14.700M13.300 0l-13.300 14.700" stroke="#a02020" stroke-width="1.300"/></svg>
<svg style="left:0px;top:682.3px;" width="975" height="14.7" viewBox="0 0 975 14.7"><rect x="13.33" y="0" width="13.39" height="14.700" fill="#000000"/><rect x="26.67" y="0" width="13.38" height="14.700" fill="#1a1a1a"/><rect x="40.0" y="0" width="13.38" height="14.700" fill="#333333"/><rect x="53.33" y="0" width="13.39" height="14.700" fill="#4d4d4d"/><rect x="66.67" y="0" width="13.38" height="14.700" fill="#666666"/><rect x="80.0" y="0" width="13.38" height="14.700" fill="#808080"/><rect x="93.33" y="0" width="13.38" height="14.700" fill="#999999"/><rect x="106.66" y="0" width="13.39" height="14.700" fill="#b3b3b3"/><rect x="120.0" y="0" width="13.38" height="14.700" fill="#cccccc"/><rect x="133.33" y="0" width="13.38" height="14.700" fill="#e6e6e6"/><rect x="146.66" y="0" width="13.39" height="14.700" fill="#ececec"/><rect x="160.0" y="0" width="13.38" height="14.700" fill="#f2f2f2"/><rect x="173.33" y="0" width="13.38" height="14.700" fill="#f9f9f9"/><rect x="186.66" y="0" width="13.39" height="14.700" fill="#ffffff"/><rect x="200.0" y="0" width="13.38" height="14.700" fill="#7a0e03"/><rect x="213.33" y="0" width="13.38" height="14.700" fill="#f3270d"/><rect x="226.66" y="0" width="13.38" height="14.700" fill="#7f7f0b"/><rect x="239.99" y="0" width="13.39" height="14.700" fill="#fdfe22"/><rect x="253.33" y="0" width="13.38" height="14.700" fill="#247e09"/><rect x="266.66" y="0" width="13.38" height="14.700" fill="#50fc1d"/><rect x="279.99" y="0" width="13.39" height="14.700" fill="#287f80"/><rect x="293.33" y="0" width="13.38" height="14.700" fill="#59fdff"/><rect x="306.66" y="0" width="13.38" height="14.700" fill="#0e077f"/><rect x="319.99" y="0" width="13.38" height="14.700" fill="#2719fd"/><rect x="333.32" y="0" width="13.39" height="14.700" fill="#7b137f"/><rect x="346.66" y="0" width="13.38" height="14.700" fill="#f630fe"/><rect x="359.99" y="0" width="13.38" height="14.700" fill="#290200"/><rect x="373.32" y="0" width="13.39" height="14.700" fill="#510601"/><rect x="386.66" y="0" width="13.38" height="14.700" fill="#7a0e03"/><rect x="399.99" y="0" width="13.38" height="14.700" fill="#a21605"/><rect x="413.32" y="0" width="13.39" height="14.700" fill="#ca1e09"/><rect x="426.66" y="0" width="13.38" height="14.700" fill="#f3270d"/><rect x="439.99" y="0" width="13.38" height="14.700" fill="#f43a2e"/><rect x="453.32" y="0" width="13.39" height="14.700" fill="#f55d57"/><rect x="466.66" y="0" width="13.38" height="14.700" fill="#f68481"/><rect x="479.99" y="0" width="13.38" height="14.700" fill="#f8acaa"/><rect x="493.32" y="0" width="13.38" height="14.700" fill="#fbd6d5"/><rect x="506.65" y="0" width="13.39" height="14.700" fill="#260c0b"/><rect x="519.99" y="0" width="13.38" height="14.700" fill="#4c1917"/><rect x="533.32" y="0" width="13.38" height="14.700" fill="#732522"/><rect x="546.65" y="0" width="13.39" height="14.700" fill="#99322d"/><rect x="559.99" y="0" width="13.38" height="14.700" fill="#bf3f39"/><rect x="573.32" y="0" width="13.38" height="14.700" fill="#cb6360"/><rect x="586.65" y="0" width="13.39" height="14.700" fill="#d78987"/><rect x="599.99" y="0" width="13.38" height="14.700" fill="#e4b0af"/><rect x="613.32" y="0" width="13.38" height="14.700" fill="#f1d8d7"/><rect x="626.65" y="0" width="13.38" height="14.700" fill="#231c1c"/><rect x="639.98" y="0" width="13.39" height="14.700" fill="#473737"/><rect x="653.32" y="0" width="13.38" height="14.700" fill="#6a5453"/><rect x="666.65" y="0" width="13.38" height="14.700" fill="#8e706f"/><rect x="679.98" y="0" width="13.39" height="14.700" fill="#aa9493"/><rect x="693.32" y="0" width="13.38" height="14.700" fill="#c6b7b7"/><rect x="706.65" y="0" width="13.38" height="14.700" fill="#e2dbdb"/><rect x="719.98" y="0" width="13.39" height="14.700" fill="#291201"/><rect x="733.32" y="0" width="13.38" height="14.700" fill="#512402"/><rect x="746.65" y="0" width="13.38" height="14.700" fill="#7b3604"/><rect x="759.98" y="0" width="13.38" height="14.700" fill="#a34808"/><rect x="773.31" y="0" width="13.39" height="14.700" fill="#cb5a0c"/><rect x="786.65" y="0" width="13.38" height="14.700" fill="#f56c11"/><rect x="799.98" y="0" width="13.38" height="14.700" fill="#f68330"/><rect x="813.31" y="0" width="13.39" height="14.700" fill="#f79b58"/><rect x="826.65" y="0" width="13.38" height="14.700" fill="#f8b582"/><rect x="839.98" y="0" width="13.38" height="14.700" fill="#facdab"/><rect x="853.31" y="0" width="13.38" height="14.700" fill="#fce6d5"/><rect x="866.64" y="0" width="13.39" height="14.700" fill="#27170b"/><rect x="879.98" y="0" width="13.38" height="14.700" fill="#4d2e17"/><rect x="893.31" y="0" width="13.38" height="14.700" fill="#744523"/><rect x="906.64" y="0" width="13.39" height="14.700" fill="#9a5c2e"/><rect x="919.98" y="0" width="13.38" height="14.700" fill="#c1733a"/><rect x="933.31" y="0" width="13.38" height="14.700" fill="#cd8e61"/><rect x="946.64" y="0" width="13.39" height="14.700" fill="#d9ab88"/><rect x="959.98" y="0" width="13.38" height="14.700" fill="#e5c7b0"/></svg>
<div style="left:3px;top:700px;width:159.5px;height:3.6px;background:#7d7d7d;border-radius:2px;"></div>
<svg style="left:984.5px;top:690.5px;" width="6" height="7" viewBox="0 0 6 7"><path d="M5 0v7l-4.500-3.500z" fill="#222"/></svg>
<div style="left:0px;top:704.3px;width:1000px;height:23.7px;background:#f5f3f1;"></div>
<span class="t" style="transform:scaleX(1.011);left:3px;transform-origin:0 50%;top:704.80px;font-size:8.5px;color:#2e3436;font-weight:500;">フィル:</span>
<span class="t" style="transform:scaleX(0.947);left:3px;transform-origin:0 50%;top:716.30px;font-size:8.5px;color:#2e3436;font-weight:500;">ストローク:</span>
<span class="t" style="transform:scaleX(0.985);left:49.8px;transform-origin:0 50%;top:704.80px;font-size:8.5px;color:#2e3436;font-weight:500;">該当なし</span>
<span class="t" style="transform:scaleX(0.985);left:49.8px;transform-origin:0 50%;top:716.30px;font-size:8.5px;color:#2e3436;font-weight:500;">該当なし</span>
<span class="t" style="transform:scaleX(0.916);left:84.6px;transform-origin:0 50%;top:710.50px;font-size:8.79px;color:#2e3436;font-weight:400;">O:</span>
<div style="left:95.2px;top:706.7px;width:46.2px;height:23px;background:#f8f7f6;border:1px solid #e6e3e0;border-radius:3px;"></div>
<span class="t" style="left:98.5px;transform-origin:0 50%;top:710.50px;font-size:8.79px;color:#b4b4b1;font-weight:400;">32</span>
<div style="left:117.5px;top:707.7px;width:1px;height:22px;background:#ebe7e3;"></div>
<div style="left:129.5px;top:707.7px;width:1px;height:22px;background:#ebe7e3;"></div>
<div style="left:120px;top:717px;width:6.5px;height:1.2px;background:#d3d1cf;"></div>
<div style="left:132px;top:717px;width:7px;height:1.2px;background:#d3d1cf;"></div>
<div style="left:134.9px;top:714.1px;width:1.2px;height:7px;background:#d3d1cf;"></div>
<svg style="left:152px;top:711.5px;" width="12.5" height="12.5" viewBox="0 0 16 16"><path d="M.8 9.200c2.600-5.800 11.800-5.800 14.400 0-2.600 5.200-11.800 5.200-14.400 0z" fill="#fff" stroke="#111" stroke-width="1.300"/><path d="M1.200 10c3 4.300 10.600 4.300 13.600 0" fill="none" stroke="#111" stroke-width="1.700"/><circle cx="8" cy="9" r="2.900" fill="#111"/><circle cx="6.900" cy="7.900" r=".9" fill="#fff"/><path d="M3 5.300l-1.500-2.300M5.600 3.900l-.8-2.800M8.300 3.500l.2-2.900M11 4l1-2.700M13.300 5.500l1.600-2.200" stroke="#111" stroke-width="1.400"/></svg>
<svg style="left:176.5px;top:711px;" width="12.5" height="12.5" viewBox="0 0 16 16"><defs><linearGradient id="lko" x1="0" y1="0" x2="1" y2="1"><stop offset="0" stop-color="#f4e6a0"/><stop offset="1" stop-color="#eccf50"/></linearGradient></defs><g transform="rotate(-18 4.700 8)"><path d="M4.700 8v-3.300a3.300 3.300 0 0 1 6.600 0v1.300" fill="none" stroke="#16181c" stroke-width="2.500"/><path d="M4.700 8v-3.300a3.300 3.300 0 0 1 6.600 0v1.300" fill="none" stroke="#7a8494" stroke-width=".7"/></g><rect x="3.300" y="7.800" width="10.400" height="7.400" rx="1" fill="url(#lko)" stroke="#4a3a10" stroke-width="1.100"/><rect x="7.800" y="9.600" width="1.400" height="3.500" fill="#5a4a18"/></svg>
<div style="left:197.4px;top:706.7px;width:67.20000000000002px;height:23.0px;background:linear-gradient(#f7f6f5,#ecebe9);border:1px solid #d6d1cc;border-radius:3px;box-shadow:0 1px 0 rgba(0,0,0,.04);"></div>
<span class="t" style="transform:scaleX(0.959);left:205.8px;transform-origin:0 50%;top:710.70px;font-size:7.47px;color:#2e3436;font-weight:700;">•芝生暗</span>
<svg style="left:250px;top:716px;" width="7" height="4" viewBox="0 0 7 4"><path d="M0 0h7l-3.500 4z" fill="#2e3436"/></svg>
<span class="t" style="transform:scaleX(0.989);left:266.6px;transform-origin:0 50%;top:704.80px;font-size:8.5px;color:#2e3436;font-weight:500;">オブジェクトが選択されていません。オブジェクトをクリック、<span style="font-size:1.06em">Shift+</span>クリック、オブジェクト上で <span style="font-size:1.06em">Alt+</span>マウススクロール、または</span>
<span class="t" style="transform:scaleX(0.984);left:266.6px;transform-origin:0 50%;top:716.20px;font-size:8.5px;color:#2e3436;font-weight:500;">囲むようにドラッグして選択してください。</span>
<div style="left:762px;top:706px;width:1px;height:22px;background:#e4e0dc;"></div>
<span class="t" style="transform:scaleX(0.964);left:769px;transform-origin:0 50%;top:704.80px;font-size:8.79px;color:#2e3436;font-weight:400;">X:</span>
<span class="t" style="transform:scaleX(1.024);left:769px;transform-origin:0 50%;top:716.50px;font-size:8.79px;color:#2e3436;font-weight:400;">Y:</span>
<span class="t" style="transform:scaleX(0.961);left:786.3px;transform-origin:0 50%;top:704.80px;font-size:8.79px;color:#2e3436;font-weight:400;">341.11</span>
<span class="t" style="transform:scaleX(0.938);left:786.3px;transform-origin:0 50%;top:716.50px;font-size:8.79px;color:#2e3436;font-weight:400;">183.17</span>
<span class="t" style="transform:scaleX(0.986);left:819.3px;transform-origin:0 50%;top:710.60px;font-size:8.79px;color:#2e3436;font-weight:400;">Z:</span>
<div style="left:834px;top:706.7px;width:66px;height:23px;background:#ffffff;border:1px solid #cdc7c2;border-radius:3px;"></div>
<span class="t" style="transform:scaleX(0.967);left:842px;transform-origin:0 50%;top:710.60px;font-size:8.79px;color:#2e3436;font-weight:400;">65%</span>
<div style="left:869.5px;top:707.7px;width:1px;height:22px;background:#e4e0dc;"></div>
<div style="left:884px;top:707.7px;width:1px;height:22px;background:#e4e0dc;"></div>
<div style="left:873.2px;top:717px;width:6.5px;height:1.3px;background:#2e3436;"></div>
<div style="left:887.8px;top:717px;width:7px;height:1.3px;background:#2e3436;"></div>
<div style="left:890.65px;top:714.15px;width:1.3px;height:7px;background:#2e3436;"></div>
<span class="t" style="transform:scaleX(0.979);left:907.7px;transform-origin:0 50%;top:710.60px;font-size:8.79px;color:#2e3436;font-weight:400;">R:</span>
<div style="left:923.3px;top:706.7px;width:70.2px;height:23px;background:#ffffff;border:1px solid #cdc7c2;border-radius:3px;"></div>
<span class="t" style="transform:scaleX(0.957);left:933px;transform-origin:0 50%;top:710.60px;font-size:8.79px;color:#2e3436;font-weight:500;"><span style="font-size:1.06em">0.00</span>°</span>
<div style="left:962px;top:707.7px;width:1px;height:22px;background:#e4e0dc;"></div>
<div style="left:977px;top:707.7px;width:1px;height:22px;background:#e4e0dc;"></div>
<div style="left:966px;top:717px;width:6.5px;height:1.3px;background:#2e3436;"></div>
<div style="left:980.9px;top:717px;width:7px;height:1.3px;background:#2e3436;"></div>
<div style="left:983.75px;top:714.15px;width:1.3px;height:7px;background:#2e3436;"></div>
</body></html>
